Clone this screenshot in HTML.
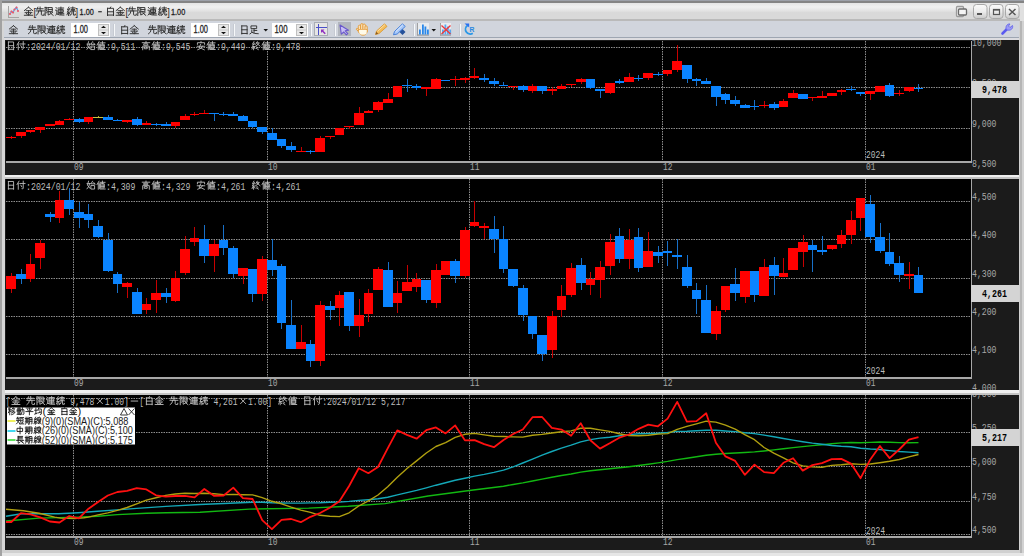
<!DOCTYPE html>
<html><head><meta charset="utf-8">
<style>
html,body{margin:0;padding:0;width:1024px;height:556px;overflow:hidden;background:#d6d6d6;}
svg{position:absolute;left:0;top:0;display:block;}
</style></head><body>
<svg width="1024" height="556" viewBox="0 0 1024 556">
<rect x="0" y="0" width="1024" height="556" fill="#d6d6d6"/>
<rect x="0" y="0" width="1024" height="1" fill="#9ca0a8"/>
<rect x="0" y="1" width="1024" height="2" fill="#848484"/>
<rect x="0" y="0" width="2" height="556" fill="#a2a2a2"/>
<defs><linearGradient id="tg" x1="0" y1="0" x2="0" y2="1"><stop offset="0" stop-color="#e4e4e4"/><stop offset="0.25" stop-color="#f0f0f0"/><stop offset="0.5" stop-color="#e2e2e2"/><stop offset="0.6" stop-color="#d9d9d9"/><stop offset="1" stop-color="#d9d9d9"/></linearGradient><linearGradient id="bg" x1="0" y1="0" x2="0" y2="1"><stop offset="0" stop-color="#fbfbfb"/><stop offset="0.5" stop-color="#ececec"/><stop offset="1" stop-color="#cacaca"/></linearGradient></defs>
<rect x="2" y="3" width="1022" height="16" fill="url(#tg)"/>
<rect x="2" y="19" width="1022" height="2" fill="#bababa"/>
<rect x="1019" y="21" width="5" height="535" fill="#d2d2d2"/>
<rect x="1020" y="21" width="2" height="532" fill="#b6b6b6"/>
<rect x="1020" y="3" width="4" height="18" fill="#e0e0e0"/>
<rect x="4" y="21" width="1015" height="16" fill="#d1d5dd"/>
<rect x="4" y="37" width="1015" height="1" fill="#9ea6b2"/>
<rect x="4" y="38" width="1015" height="2" fill="#dcdce0"/>
<rect x="5" y="40" width="1014" height="510" fill="#1b1b1b"/>
<rect x="2" y="550" width="1018" height="6" fill="#d0d0d0"/>
<rect x="2" y="553" width="1022" height="3" fill="#e6e6e6"/>
<rect x="6" y="41" width="965" height="120" fill="#000"/>
<rect x="971" y="41" width="1" height="122" fill="#a8a8a8"/>
<rect x="6" y="161" width="966" height="2" fill="#a8a8a8"/>
<rect x="6" y="179" width="965" height="198" fill="#000"/>
<rect x="971" y="179" width="1" height="200" fill="#a8a8a8"/>
<rect x="6" y="377" width="966" height="2" fill="#a8a8a8"/>
<rect x="6" y="395" width="965" height="141" fill="#000"/>
<rect x="971" y="395" width="1" height="143" fill="#a8a8a8"/>
<rect x="6" y="536" width="966" height="2" fill="#a8a8a8"/>
<g stroke="#8e8e8e" stroke-width="1" stroke-dasharray="1.5,1" fill="none">
<line x1="6" y1="47.5" x2="971" y2="47.5" />
<line x1="6" y1="87.5" x2="971" y2="87.5" />
<line x1="6" y1="128.5" x2="971" y2="128.5" />
<line x1="73.5" y1="41" x2="73.5" y2="161" />
<line x1="267.5" y1="41" x2="267.5" y2="161" />
<line x1="469.5" y1="41" x2="469.5" y2="161" />
<line x1="662.5" y1="41" x2="662.5" y2="161" />
<line x1="865.5" y1="41" x2="865.5" y2="161" />
<line x1="6" y1="201.5" x2="971" y2="201.5" />
<line x1="6" y1="239.5" x2="971" y2="239.5" />
<line x1="6" y1="278.5" x2="971" y2="278.5" />
<line x1="6" y1="316.5" x2="971" y2="316.5" />
<line x1="6" y1="354.5" x2="971" y2="354.5" />
<line x1="73.5" y1="179" x2="73.5" y2="377" />
<line x1="267.5" y1="179" x2="267.5" y2="377" />
<line x1="469.5" y1="179" x2="469.5" y2="377" />
<line x1="662.5" y1="179" x2="662.5" y2="377" />
<line x1="865.5" y1="179" x2="865.5" y2="377" />
<line x1="6" y1="398.5" x2="971" y2="398.5" />
<line x1="6" y1="432.5" x2="971" y2="432.5" />
<line x1="6" y1="466.5" x2="971" y2="466.5" />
<line x1="6" y1="501.5" x2="971" y2="501.5" />
<line x1="6" y1="534.5" x2="971" y2="534.5" />
<line x1="73.5" y1="395" x2="73.5" y2="536" />
<line x1="267.5" y1="395" x2="267.5" y2="536" />
<line x1="469.5" y1="395" x2="469.5" y2="536" />
<line x1="662.5" y1="395" x2="662.5" y2="536" />
<line x1="865.5" y1="395" x2="865.5" y2="536" />
</g>
<g shape-rendering="crispEdges">
<rect x="11" y="136" width="1" height="3" fill="#c80000"/>
<rect x="6" y="137" width="10" height="1" fill="#ff0000"/>
<rect x="21" y="132" width="1" height="6" fill="#c80000"/>
<rect x="16" y="132" width="10" height="4" fill="#ff0000"/>
<rect x="30" y="130" width="1" height="3" fill="#c80000"/>
<rect x="26" y="130" width="9" height="2" fill="#ff0000"/>
<rect x="40" y="127" width="1" height="6" fill="#c80000"/>
<rect x="35" y="127" width="10" height="3" fill="#ff0000"/>
<rect x="50" y="124" width="1" height="2" fill="#c80000"/>
<rect x="45" y="124" width="10" height="2" fill="#ff0000"/>
<rect x="59" y="120" width="1" height="5" fill="#c80000"/>
<rect x="55" y="121" width="9" height="4" fill="#ff0000"/>
<rect x="69" y="118" width="1" height="2" fill="#c80000"/>
<rect x="64" y="119" width="10" height="1" fill="#ff0000"/>
<rect x="79" y="118" width="1" height="5" fill="#1870c8"/>
<rect x="74" y="119" width="10" height="3" fill="#0a84ff"/>
<rect x="88" y="117" width="1" height="7" fill="#c80000"/>
<rect x="84" y="117" width="9" height="5" fill="#ff0000"/>
<rect x="98" y="116" width="1" height="2" fill="#b0a830"/>
<rect x="93" y="117" width="10" height="1" fill="#c8c040"/>
<rect x="108" y="115" width="1" height="5" fill="#1870c8"/>
<rect x="103" y="117" width="10" height="3" fill="#0a84ff"/>
<rect x="117" y="119" width="1" height="2" fill="#1870c8"/>
<rect x="113" y="120" width="9" height="1" fill="#0a84ff"/>
<rect x="127" y="120" width="1" height="3" fill="#c80000"/>
<rect x="122" y="120" width="10" height="2" fill="#ff0000"/>
<rect x="137" y="117" width="1" height="9" fill="#1870c8"/>
<rect x="132" y="119" width="10" height="6" fill="#0a84ff"/>
<rect x="146" y="121" width="1" height="4" fill="#c80000"/>
<rect x="142" y="123" width="9" height="2" fill="#ff0000"/>
<rect x="156" y="123" width="1" height="3" fill="#1870c8"/>
<rect x="151" y="124" width="10" height="1" fill="#0a84ff"/>
<rect x="166" y="122" width="1" height="4" fill="#1870c8"/>
<rect x="161" y="124" width="10" height="2" fill="#0a84ff"/>
<rect x="175" y="122" width="1" height="6" fill="#c80000"/>
<rect x="171" y="122" width="9" height="4" fill="#ff0000"/>
<rect x="185" y="114" width="1" height="6" fill="#c80000"/>
<rect x="180" y="116" width="10" height="4" fill="#ff0000"/>
<rect x="194" y="112" width="1" height="4" fill="#c80000"/>
<rect x="190" y="114" width="9" height="1" fill="#ff0000"/>
<rect x="204" y="110" width="1" height="4" fill="#c80000"/>
<rect x="199" y="113" width="10" height="1" fill="#ff0000"/>
<rect x="214" y="113" width="1" height="8" fill="#1870c8"/>
<rect x="209" y="113" width="10" height="1" fill="#0a84ff"/>
<rect x="223" y="112" width="1" height="4" fill="#1870c8"/>
<rect x="219" y="114" width="9" height="1" fill="#0a84ff"/>
<rect x="233" y="112" width="1" height="4" fill="#1870c8"/>
<rect x="228" y="114" width="10" height="2" fill="#0a84ff"/>
<rect x="243" y="115" width="1" height="6" fill="#1870c8"/>
<rect x="238" y="116" width="10" height="5" fill="#0a84ff"/>
<rect x="252" y="121" width="1" height="7" fill="#1870c8"/>
<rect x="248" y="121" width="9" height="6" fill="#0a84ff"/>
<rect x="262" y="127" width="1" height="7" fill="#1870c8"/>
<rect x="257" y="127" width="10" height="5" fill="#0a84ff"/>
<rect x="272" y="128" width="1" height="12" fill="#1870c8"/>
<rect x="267" y="133" width="10" height="7" fill="#0a84ff"/>
<rect x="281" y="139" width="1" height="9" fill="#1870c8"/>
<rect x="277" y="139" width="9" height="7" fill="#0a84ff"/>
<rect x="291" y="142" width="1" height="10" fill="#1870c8"/>
<rect x="286" y="146" width="10" height="4" fill="#0a84ff"/>
<rect x="301" y="147" width="1" height="5" fill="#c80000"/>
<rect x="296" y="151" width="10" height="1" fill="#ff0000"/>
<rect x="310" y="150" width="1" height="4" fill="#1870c8"/>
<rect x="306" y="151" width="9" height="1" fill="#0a84ff"/>
<rect x="320" y="136" width="1" height="16" fill="#c80000"/>
<rect x="315" y="138" width="10" height="14" fill="#ff0000"/>
<rect x="330" y="136" width="1" height="3" fill="#c80000"/>
<rect x="325" y="136" width="10" height="1" fill="#ff0000"/>
<rect x="339" y="128" width="1" height="7" fill="#c80000"/>
<rect x="335" y="128" width="9" height="7" fill="#ff0000"/>
<rect x="349" y="126" width="1" height="3" fill="#c80000"/>
<rect x="344" y="126" width="10" height="1" fill="#ff0000"/>
<rect x="359" y="107" width="1" height="18" fill="#c80000"/>
<rect x="354" y="113" width="10" height="12" fill="#ff0000"/>
<rect x="368" y="110" width="1" height="3" fill="#c80000"/>
<rect x="364" y="111" width="9" height="2" fill="#ff0000"/>
<rect x="378" y="101" width="1" height="11" fill="#c80000"/>
<rect x="373" y="102" width="10" height="8" fill="#ff0000"/>
<rect x="388" y="93" width="1" height="10" fill="#c80000"/>
<rect x="383" y="99" width="10" height="4" fill="#ff0000"/>
<rect x="397" y="86" width="1" height="11" fill="#c80000"/>
<rect x="393" y="86" width="9" height="11" fill="#ff0000"/>
<rect x="407" y="79" width="1" height="13" fill="#1870c8"/>
<rect x="402" y="85" width="10" height="1" fill="#0a84ff"/>
<rect x="416" y="84" width="1" height="6" fill="#1870c8"/>
<rect x="412" y="86" width="9" height="2" fill="#0a84ff"/>
<rect x="426" y="87" width="1" height="9" fill="#c80000"/>
<rect x="421" y="87" width="10" height="2" fill="#ff0000"/>
<rect x="436" y="78" width="1" height="11" fill="#c80000"/>
<rect x="431" y="79" width="10" height="10" fill="#ff0000"/>
<rect x="445" y="80" width="1" height="1" fill="#1870c8"/>
<rect x="441" y="80" width="9" height="1" fill="#0a84ff"/>
<rect x="455" y="76" width="1" height="10" fill="#c80000"/>
<rect x="450" y="79" width="10" height="1" fill="#ff0000"/>
<rect x="465" y="77" width="1" height="6" fill="#c80000"/>
<rect x="460" y="78" width="10" height="2" fill="#ff0000"/>
<rect x="474" y="68" width="1" height="11" fill="#c80000"/>
<rect x="470" y="76" width="9" height="2" fill="#ff0000"/>
<rect x="484" y="74" width="1" height="8" fill="#1870c8"/>
<rect x="479" y="78" width="10" height="2" fill="#0a84ff"/>
<rect x="494" y="78" width="1" height="8" fill="#1870c8"/>
<rect x="489" y="81" width="10" height="3" fill="#0a84ff"/>
<rect x="503" y="82" width="1" height="4" fill="#1870c8"/>
<rect x="499" y="85" width="9" height="1" fill="#0a84ff"/>
<rect x="513" y="86" width="1" height="4" fill="#c80000"/>
<rect x="508" y="86" width="10" height="1" fill="#ff0000"/>
<rect x="523" y="85" width="1" height="7" fill="#1870c8"/>
<rect x="518" y="86" width="10" height="4" fill="#0a84ff"/>
<rect x="532" y="84" width="1" height="9" fill="#c80000"/>
<rect x="528" y="86" width="9" height="5" fill="#ff0000"/>
<rect x="542" y="86" width="1" height="8" fill="#1870c8"/>
<rect x="537" y="86" width="10" height="5" fill="#0a84ff"/>
<rect x="552" y="87" width="1" height="8" fill="#c80000"/>
<rect x="547" y="89" width="10" height="2" fill="#ff0000"/>
<rect x="561" y="84" width="1" height="5" fill="#c80000"/>
<rect x="557" y="86" width="9" height="3" fill="#ff0000"/>
<rect x="571" y="84" width="1" height="3" fill="#c80000"/>
<rect x="566" y="84" width="10" height="1" fill="#ff0000"/>
<rect x="581" y="78" width="1" height="6" fill="#c80000"/>
<rect x="576" y="79" width="10" height="3" fill="#ff0000"/>
<rect x="590" y="79" width="1" height="10" fill="#1870c8"/>
<rect x="586" y="79" width="9" height="9" fill="#0a84ff"/>
<rect x="600" y="89" width="1" height="9" fill="#1870c8"/>
<rect x="595" y="89" width="10" height="2" fill="#0a84ff"/>
<rect x="610" y="83" width="1" height="11" fill="#c80000"/>
<rect x="605" y="83" width="10" height="10" fill="#ff0000"/>
<rect x="619" y="79" width="1" height="5" fill="#1870c8"/>
<rect x="615" y="81" width="9" height="2" fill="#0a84ff"/>
<rect x="629" y="73" width="1" height="9" fill="#c80000"/>
<rect x="624" y="77" width="10" height="5" fill="#ff0000"/>
<rect x="638" y="75" width="1" height="6" fill="#1870c8"/>
<rect x="634" y="78" width="9" height="1" fill="#0a84ff"/>
<rect x="648" y="73" width="1" height="7" fill="#c80000"/>
<rect x="643" y="73" width="10" height="5" fill="#ff0000"/>
<rect x="658" y="72" width="1" height="4" fill="#1870c8"/>
<rect x="653" y="74" width="10" height="1" fill="#0a84ff"/>
<rect x="667" y="70" width="1" height="6" fill="#c80000"/>
<rect x="663" y="70" width="9" height="4" fill="#ff0000"/>
<rect x="677" y="45" width="1" height="27" fill="#c80000"/>
<rect x="672" y="61" width="10" height="9" fill="#ff0000"/>
<rect x="687" y="65" width="1" height="18" fill="#1870c8"/>
<rect x="682" y="65" width="10" height="14" fill="#0a84ff"/>
<rect x="696" y="78" width="1" height="8" fill="#1870c8"/>
<rect x="692" y="79" width="9" height="2" fill="#0a84ff"/>
<rect x="706" y="78" width="1" height="6" fill="#1870c8"/>
<rect x="701" y="81" width="10" height="3" fill="#0a84ff"/>
<rect x="716" y="86" width="1" height="20" fill="#1870c8"/>
<rect x="711" y="86" width="10" height="11" fill="#0a84ff"/>
<rect x="725" y="93" width="1" height="11" fill="#1870c8"/>
<rect x="721" y="94" width="9" height="6" fill="#0a84ff"/>
<rect x="735" y="96" width="1" height="10" fill="#1870c8"/>
<rect x="730" y="100" width="10" height="4" fill="#0a84ff"/>
<rect x="745" y="104" width="1" height="4" fill="#1870c8"/>
<rect x="740" y="105" width="10" height="3" fill="#0a84ff"/>
<rect x="754" y="100" width="1" height="10" fill="#1870c8"/>
<rect x="750" y="106" width="9" height="1" fill="#0a84ff"/>
<rect x="764" y="101" width="1" height="7" fill="#c80000"/>
<rect x="759" y="105" width="10" height="1" fill="#ff0000"/>
<rect x="774" y="102" width="1" height="8" fill="#1870c8"/>
<rect x="769" y="104" width="10" height="4" fill="#0a84ff"/>
<rect x="783" y="99" width="1" height="8" fill="#c80000"/>
<rect x="779" y="101" width="9" height="6" fill="#ff0000"/>
<rect x="793" y="90" width="1" height="8" fill="#c80000"/>
<rect x="788" y="93" width="10" height="5" fill="#ff0000"/>
<rect x="803" y="94" width="1" height="5" fill="#1870c8"/>
<rect x="798" y="94" width="10" height="5" fill="#0a84ff"/>
<rect x="812" y="97" width="1" height="4" fill="#c80000"/>
<rect x="808" y="97" width="9" height="1" fill="#ff0000"/>
<rect x="822" y="91" width="1" height="7" fill="#c80000"/>
<rect x="817" y="96" width="10" height="2" fill="#ff0000"/>
<rect x="832" y="93" width="1" height="3" fill="#c80000"/>
<rect x="827" y="93" width="10" height="3" fill="#ff0000"/>
<rect x="841" y="89" width="1" height="6" fill="#c80000"/>
<rect x="837" y="90" width="9" height="2" fill="#ff0000"/>
<rect x="851" y="86" width="1" height="5" fill="#1870c8"/>
<rect x="846" y="89" width="10" height="1" fill="#0a84ff"/>
<rect x="860" y="92" width="1" height="4" fill="#1870c8"/>
<rect x="856" y="92" width="9" height="2" fill="#0a84ff"/>
<rect x="870" y="91" width="1" height="9" fill="#c80000"/>
<rect x="865" y="91" width="10" height="3" fill="#ff0000"/>
<rect x="880" y="86" width="1" height="6" fill="#c80000"/>
<rect x="875" y="86" width="10" height="6" fill="#ff0000"/>
<rect x="889" y="83" width="1" height="14" fill="#1870c8"/>
<rect x="885" y="85" width="9" height="11" fill="#0a84ff"/>
<rect x="899" y="90" width="1" height="6" fill="#c80000"/>
<rect x="894" y="93" width="10" height="1" fill="#ff0000"/>
<rect x="909" y="87" width="1" height="5" fill="#c80000"/>
<rect x="904" y="87" width="10" height="4" fill="#ff0000"/>
<rect x="918" y="84" width="1" height="8" fill="#1870c8"/>
<rect x="914" y="88" width="9" height="1" fill="#0a84ff"/>
<rect x="11" y="273" width="1" height="20" fill="#c80000"/>
<rect x="6" y="276" width="10" height="13" fill="#ff0000"/>
<rect x="21" y="269" width="1" height="15" fill="#1870c8"/>
<rect x="16" y="274" width="10" height="5" fill="#0a84ff"/>
<rect x="30" y="254" width="1" height="28" fill="#c80000"/>
<rect x="26" y="264" width="9" height="15" fill="#ff0000"/>
<rect x="40" y="240" width="1" height="29" fill="#c80000"/>
<rect x="35" y="243" width="10" height="15" fill="#ff0000"/>
<rect x="50" y="212" width="1" height="10" fill="#1870c8"/>
<rect x="45" y="214" width="10" height="3" fill="#0a84ff"/>
<rect x="59" y="191" width="1" height="32" fill="#c80000"/>
<rect x="55" y="200" width="9" height="18" fill="#ff0000"/>
<rect x="69" y="188" width="1" height="27" fill="#1870c8"/>
<rect x="64" y="200" width="10" height="9" fill="#0a84ff"/>
<rect x="79" y="202" width="1" height="26" fill="#1870c8"/>
<rect x="74" y="212" width="10" height="6" fill="#0a84ff"/>
<rect x="88" y="204" width="1" height="24" fill="#1870c8"/>
<rect x="84" y="214" width="9" height="6" fill="#0a84ff"/>
<rect x="98" y="220" width="1" height="18" fill="#1870c8"/>
<rect x="93" y="226" width="10" height="11" fill="#0a84ff"/>
<rect x="108" y="233" width="1" height="39" fill="#1870c8"/>
<rect x="103" y="240" width="10" height="31" fill="#0a84ff"/>
<rect x="117" y="272" width="1" height="21" fill="#1870c8"/>
<rect x="113" y="274" width="9" height="10" fill="#0a84ff"/>
<rect x="127" y="282" width="1" height="16" fill="#c80000"/>
<rect x="122" y="283" width="10" height="4" fill="#ff0000"/>
<rect x="137" y="288" width="1" height="26" fill="#1870c8"/>
<rect x="132" y="292" width="10" height="22" fill="#0a84ff"/>
<rect x="146" y="298" width="1" height="16" fill="#c80000"/>
<rect x="142" y="304" width="9" height="6" fill="#ff0000"/>
<rect x="156" y="280" width="1" height="33" fill="#c80000"/>
<rect x="151" y="293" width="10" height="7" fill="#ff0000"/>
<rect x="166" y="288" width="1" height="15" fill="#1870c8"/>
<rect x="161" y="293" width="10" height="4" fill="#0a84ff"/>
<rect x="175" y="271" width="1" height="31" fill="#c80000"/>
<rect x="171" y="278" width="9" height="23" fill="#ff0000"/>
<rect x="185" y="236" width="1" height="39" fill="#c80000"/>
<rect x="180" y="249" width="10" height="24" fill="#ff0000"/>
<rect x="194" y="227" width="1" height="19" fill="#c80000"/>
<rect x="190" y="238" width="9" height="4" fill="#ff0000"/>
<rect x="204" y="225" width="1" height="38" fill="#1870c8"/>
<rect x="199" y="239" width="10" height="17" fill="#0a84ff"/>
<rect x="214" y="240" width="1" height="32" fill="#c80000"/>
<rect x="209" y="244" width="10" height="12" fill="#ff0000"/>
<rect x="223" y="225" width="1" height="30" fill="#1870c8"/>
<rect x="219" y="240" width="9" height="8" fill="#0a84ff"/>
<rect x="233" y="246" width="1" height="32" fill="#1870c8"/>
<rect x="228" y="248" width="10" height="26" fill="#0a84ff"/>
<rect x="243" y="268" width="1" height="16" fill="#c80000"/>
<rect x="238" y="268" width="10" height="8" fill="#ff0000"/>
<rect x="252" y="269" width="1" height="33" fill="#1870c8"/>
<rect x="248" y="269" width="9" height="25" fill="#0a84ff"/>
<rect x="262" y="256" width="1" height="45" fill="#c80000"/>
<rect x="257" y="259" width="10" height="35" fill="#ff0000"/>
<rect x="272" y="239" width="1" height="37" fill="#1870c8"/>
<rect x="267" y="260" width="10" height="10" fill="#0a84ff"/>
<rect x="281" y="264" width="1" height="65" fill="#1870c8"/>
<rect x="277" y="266" width="9" height="57" fill="#0a84ff"/>
<rect x="291" y="300" width="1" height="49" fill="#1870c8"/>
<rect x="286" y="325" width="10" height="24" fill="#0a84ff"/>
<rect x="301" y="325" width="1" height="24" fill="#c80000"/>
<rect x="296" y="342" width="10" height="7" fill="#ff0000"/>
<rect x="310" y="340" width="1" height="27" fill="#1870c8"/>
<rect x="306" y="344" width="9" height="17" fill="#0a84ff"/>
<rect x="320" y="301" width="1" height="65" fill="#c80000"/>
<rect x="315" y="305" width="10" height="56" fill="#ff0000"/>
<rect x="330" y="301" width="1" height="19" fill="#1870c8"/>
<rect x="325" y="306" width="10" height="4" fill="#0a84ff"/>
<rect x="339" y="291" width="1" height="35" fill="#c80000"/>
<rect x="335" y="295" width="9" height="13" fill="#ff0000"/>
<rect x="349" y="292" width="1" height="39" fill="#1870c8"/>
<rect x="344" y="292" width="10" height="34" fill="#0a84ff"/>
<rect x="359" y="299" width="1" height="38" fill="#c80000"/>
<rect x="354" y="315" width="10" height="11" fill="#ff0000"/>
<rect x="368" y="289" width="1" height="33" fill="#c80000"/>
<rect x="364" y="293" width="9" height="21" fill="#ff0000"/>
<rect x="378" y="267" width="1" height="23" fill="#c80000"/>
<rect x="373" y="269" width="10" height="21" fill="#ff0000"/>
<rect x="388" y="262" width="1" height="45" fill="#1870c8"/>
<rect x="383" y="270" width="10" height="37" fill="#0a84ff"/>
<rect x="397" y="281" width="1" height="32" fill="#c80000"/>
<rect x="393" y="293" width="9" height="10" fill="#ff0000"/>
<rect x="407" y="265" width="1" height="26" fill="#c80000"/>
<rect x="402" y="282" width="10" height="9" fill="#ff0000"/>
<rect x="416" y="273" width="1" height="19" fill="#c80000"/>
<rect x="412" y="279" width="9" height="8" fill="#ff0000"/>
<rect x="426" y="280" width="1" height="23" fill="#1870c8"/>
<rect x="421" y="280" width="10" height="20" fill="#0a84ff"/>
<rect x="436" y="264" width="1" height="44" fill="#c80000"/>
<rect x="431" y="270" width="10" height="33" fill="#ff0000"/>
<rect x="445" y="261" width="1" height="14" fill="#c80000"/>
<rect x="441" y="261" width="9" height="14" fill="#ff0000"/>
<rect x="455" y="259" width="1" height="24" fill="#1870c8"/>
<rect x="450" y="261" width="10" height="15" fill="#0a84ff"/>
<rect x="465" y="227" width="1" height="51" fill="#c80000"/>
<rect x="460" y="230" width="10" height="46" fill="#ff0000"/>
<rect x="474" y="201" width="1" height="26" fill="#c80000"/>
<rect x="470" y="222" width="9" height="4" fill="#ff0000"/>
<rect x="484" y="223" width="1" height="16" fill="#c80000"/>
<rect x="479" y="226" width="10" height="2" fill="#ff0000"/>
<rect x="494" y="216" width="1" height="37" fill="#1870c8"/>
<rect x="489" y="229" width="10" height="10" fill="#0a84ff"/>
<rect x="503" y="226" width="1" height="47" fill="#1870c8"/>
<rect x="499" y="239" width="9" height="30" fill="#0a84ff"/>
<rect x="513" y="269" width="1" height="18" fill="#1870c8"/>
<rect x="508" y="269" width="10" height="17" fill="#0a84ff"/>
<rect x="523" y="285" width="1" height="36" fill="#1870c8"/>
<rect x="518" y="288" width="10" height="27" fill="#0a84ff"/>
<rect x="532" y="316" width="1" height="23" fill="#1870c8"/>
<rect x="528" y="316" width="9" height="18" fill="#0a84ff"/>
<rect x="542" y="335" width="1" height="26" fill="#1870c8"/>
<rect x="537" y="335" width="10" height="19" fill="#0a84ff"/>
<rect x="552" y="311" width="1" height="47" fill="#c80000"/>
<rect x="547" y="316" width="10" height="34" fill="#ff0000"/>
<rect x="561" y="285" width="1" height="32" fill="#c80000"/>
<rect x="557" y="296" width="9" height="14" fill="#ff0000"/>
<rect x="571" y="263" width="1" height="34" fill="#c80000"/>
<rect x="566" y="268" width="10" height="27" fill="#ff0000"/>
<rect x="581" y="258" width="1" height="32" fill="#1870c8"/>
<rect x="576" y="265" width="10" height="18" fill="#0a84ff"/>
<rect x="590" y="272" width="1" height="23" fill="#c80000"/>
<rect x="586" y="279" width="9" height="6" fill="#ff0000"/>
<rect x="600" y="261" width="1" height="37" fill="#c80000"/>
<rect x="595" y="267" width="10" height="13" fill="#ff0000"/>
<rect x="610" y="234" width="1" height="41" fill="#c80000"/>
<rect x="605" y="242" width="10" height="24" fill="#ff0000"/>
<rect x="619" y="228" width="1" height="35" fill="#1870c8"/>
<rect x="615" y="236" width="9" height="23" fill="#0a84ff"/>
<rect x="629" y="229" width="1" height="40" fill="#c80000"/>
<rect x="624" y="240" width="10" height="19" fill="#ff0000"/>
<rect x="638" y="228" width="1" height="44" fill="#1870c8"/>
<rect x="634" y="237" width="9" height="31" fill="#0a84ff"/>
<rect x="648" y="232" width="1" height="35" fill="#c80000"/>
<rect x="643" y="251" width="10" height="16" fill="#ff0000"/>
<rect x="658" y="246" width="1" height="17" fill="#1870c8"/>
<rect x="653" y="252" width="10" height="4" fill="#0a84ff"/>
<rect x="667" y="241" width="1" height="25" fill="#1870c8"/>
<rect x="663" y="251" width="9" height="2" fill="#0a84ff"/>
<rect x="677" y="239" width="1" height="30" fill="#1870c8"/>
<rect x="672" y="255" width="10" height="2" fill="#0a84ff"/>
<rect x="687" y="255" width="1" height="33" fill="#1870c8"/>
<rect x="682" y="267" width="10" height="19" fill="#0a84ff"/>
<rect x="696" y="283" width="1" height="31" fill="#1870c8"/>
<rect x="692" y="290" width="9" height="9" fill="#0a84ff"/>
<rect x="706" y="285" width="1" height="48" fill="#1870c8"/>
<rect x="701" y="300" width="10" height="33" fill="#0a84ff"/>
<rect x="716" y="306" width="1" height="34" fill="#c80000"/>
<rect x="711" y="311" width="10" height="23" fill="#ff0000"/>
<rect x="725" y="286" width="1" height="26" fill="#c80000"/>
<rect x="721" y="286" width="9" height="24" fill="#ff0000"/>
<rect x="735" y="268" width="1" height="33" fill="#1870c8"/>
<rect x="730" y="284" width="10" height="9" fill="#0a84ff"/>
<rect x="745" y="271" width="1" height="32" fill="#c80000"/>
<rect x="740" y="271" width="10" height="26" fill="#ff0000"/>
<rect x="754" y="271" width="1" height="31" fill="#1870c8"/>
<rect x="750" y="271" width="9" height="24" fill="#0a84ff"/>
<rect x="764" y="259" width="1" height="37" fill="#c80000"/>
<rect x="759" y="267" width="10" height="29" fill="#ff0000"/>
<rect x="774" y="257" width="1" height="38" fill="#1870c8"/>
<rect x="769" y="265" width="10" height="11" fill="#0a84ff"/>
<rect x="783" y="258" width="1" height="19" fill="#c80000"/>
<rect x="779" y="273" width="9" height="4" fill="#ff0000"/>
<rect x="793" y="248" width="1" height="22" fill="#c80000"/>
<rect x="788" y="248" width="10" height="22" fill="#ff0000"/>
<rect x="803" y="235" width="1" height="32" fill="#c80000"/>
<rect x="798" y="242" width="10" height="10" fill="#ff0000"/>
<rect x="812" y="240" width="1" height="32" fill="#1870c8"/>
<rect x="808" y="245" width="9" height="5" fill="#0a84ff"/>
<rect x="822" y="236" width="1" height="19" fill="#1870c8"/>
<rect x="817" y="250" width="10" height="2" fill="#0a84ff"/>
<rect x="832" y="245" width="1" height="5" fill="#c80000"/>
<rect x="827" y="245" width="10" height="4" fill="#ff0000"/>
<rect x="841" y="230" width="1" height="18" fill="#c80000"/>
<rect x="837" y="235" width="9" height="9" fill="#ff0000"/>
<rect x="851" y="211" width="1" height="33" fill="#c80000"/>
<rect x="846" y="220" width="10" height="15" fill="#ff0000"/>
<rect x="860" y="198" width="1" height="33" fill="#c80000"/>
<rect x="856" y="198" width="9" height="20" fill="#ff0000"/>
<rect x="870" y="195" width="1" height="48" fill="#1870c8"/>
<rect x="865" y="204" width="10" height="33" fill="#0a84ff"/>
<rect x="880" y="223" width="1" height="30" fill="#1870c8"/>
<rect x="875" y="237" width="10" height="14" fill="#0a84ff"/>
<rect x="889" y="233" width="1" height="33" fill="#1870c8"/>
<rect x="885" y="252" width="9" height="12" fill="#0a84ff"/>
<rect x="899" y="256" width="1" height="26" fill="#1870c8"/>
<rect x="894" y="263" width="10" height="12" fill="#0a84ff"/>
<rect x="909" y="262" width="1" height="27" fill="#c80000"/>
<rect x="904" y="274" width="10" height="2" fill="#ff0000"/>
<rect x="918" y="267" width="1" height="26" fill="#1870c8"/>
<rect x="914" y="275" width="9" height="18" fill="#0a84ff"/>
</g>
<g fill="none" stroke-linejoin="round">
<polyline points="6.0,521.0 39.0,518.1 78.0,517.1 97.7,516.2 117.2,514.6 146.5,513.2 166.0,512.7 200.0,512.3 249.3,509.1 308.7,508.1 348.3,506.2 385.0,503.6 428.1,496.0 471.3,490.2 503.5,486.2 513.2,484.5 522.8,482.9 532.5,481.0 542.1,479.1 551.8,477.3 561.4,475.5 571.1,474.0 580.7,472.1 590.4,470.8 600.0,469.8 609.7,468.8 619.3,467.7 629.0,466.7 638.6,465.5 648.3,464.3 657.9,462.9 667.6,461.4 677.2,459.6 686.9,458.2 696.5,456.7 706.2,455.3 715.9,454.3 725.5,453.5 735.2,453.0 744.8,452.5 754.5,451.9 764.1,451.0 773.8,449.9 783.4,448.8 793.1,447.6 802.7,446.6 812.4,445.6 822.0,444.7 831.7,443.7 841.3,442.9 851.0,442.5 860.6,442.7 870.3,442.4 879.9,442.0 889.6,442.2 899.2,442.6 908.9,442.7 918.5,442.6" stroke="#12b812" stroke-width="1.4"/>
<polyline points="6.0,516.2 21.5,513.8 58.6,513.8 78.0,512.7 97.7,511.3 117.2,509.9 136.7,508.4 166.0,506.4 200.0,504.5 229.6,503.2 252.6,502.2 262.2,502.2 271.9,502.8 281.5,503.0 291.2,503.1 300.8,503.1 310.5,502.9 320.1,502.8 329.8,502.3 339.4,502.1 349.1,501.4 358.7,500.4 368.4,499.7 378.0,498.8 387.7,497.2 397.3,494.9 407.0,492.6 416.6,490.4 426.3,487.9 435.9,485.2 445.6,482.8 455.2,480.3 464.9,478.2 474.6,476.1 484.2,474.4 493.9,472.4 503.5,470.1 513.2,466.8 522.8,463.0 532.5,459.1 542.1,455.1 551.8,451.5 561.4,448.1 571.1,445.2 580.7,441.9 590.4,439.6 600.0,438.1 609.7,437.2 619.3,435.8 629.0,434.6 638.6,433.8 648.3,433.6 657.9,433.3 667.6,432.5 677.2,431.4 686.9,431.2 696.5,430.7 706.2,430.2 715.9,430.3 725.5,431.0 735.2,431.6 744.8,432.7 754.5,433.6 764.1,435.1 773.8,436.8 783.4,438.5 793.1,440.1 802.7,441.7 812.4,443.1 822.0,444.2 831.7,445.5 841.3,446.3 851.0,446.8 860.6,448.2 870.3,449.0 879.9,449.5 889.6,450.6 899.2,451.5 908.9,452.1 918.5,452.8" stroke="#14a8b8" stroke-width="1.4"/>
<polyline points="6.0,509.3 23.4,510.7 39.0,513.2 54.7,517.1 60.5,518.1 74.2,518.5 84.0,517.7 88.5,517.1 98.1,514.9 107.8,512.9 117.4,510.4 127.1,507.5 136.7,503.8 146.4,500.1 156.0,497.8 165.7,495.4 175.3,494.0 185.0,493.3 194.6,493.5 204.3,493.2 213.9,493.7 223.6,494.6 233.3,494.4 242.9,494.7 252.6,494.9 262.2,497.6 271.9,501.3 281.5,503.8 291.2,507.2 300.8,510.1 310.5,512.4 320.1,515.3 329.8,516.3 339.4,516.6 349.1,512.8 358.7,506.0 368.4,500.8 378.0,495.0 387.7,486.8 397.3,477.2 407.0,468.5 416.6,460.9 426.3,453.0 435.9,446.5 445.6,442.6 455.2,437.3 464.9,434.3 474.6,433.4 484.2,434.9 493.9,436.3 503.5,436.5 513.2,436.9 522.8,437.1 532.5,435.3 542.1,434.4 551.8,433.0 561.4,431.8 571.1,430.9 580.7,428.3 590.4,428.3 600.0,429.9 609.7,431.4 619.3,433.7 629.0,435.6 638.6,435.7 648.3,435.2 657.9,434.1 667.6,433.6 677.2,429.4 686.9,426.4 696.5,423.9 706.2,421.2 715.9,422.1 725.5,425.2 735.2,429.2 744.8,434.6 754.5,439.7 764.1,447.5 773.8,453.2 783.4,457.9 793.1,462.8 802.7,465.9 812.4,466.9 822.0,467.2 831.7,465.4 841.3,464.8 851.0,463.8 860.6,464.4 870.3,464.0 879.9,462.7 889.6,461.3 899.2,459.5 908.9,456.9 918.5,454.5" stroke="#b0a010" stroke-width="1.4"/>
<polyline points="6.0,522.0 11.3,522.0 20.9,513.1 30.6,514.4 40.2,517.4 49.9,521.5 59.5,522.5 69.2,516.0 78.8,518.4 88.5,508.7 98.1,502.0 107.8,495.5 117.4,492.0 127.1,490.9 136.7,488.2 146.4,489.4 156.0,495.3 165.7,496.6 175.3,496.0 185.0,495.9 194.6,497.4 204.3,489.0 213.9,495.8 223.6,495.5 233.3,487.6 242.9,498.2 252.6,499.0 262.2,520.1 271.9,529.1 281.5,519.9 291.2,519.0 300.8,522.2 310.5,516.8 320.1,513.0 329.8,507.7 339.4,501.2 349.1,486.0 358.7,468.2 368.4,473.2 378.0,467.0 387.7,448.3 397.3,430.4 407.0,434.9 416.6,438.7 426.3,430.2 435.9,427.4 445.6,433.4 455.2,425.4 464.9,440.3 474.6,440.1 484.2,444.1 493.9,447.2 503.5,440.0 513.2,434.0 522.8,429.5 532.5,417.2 542.1,417.0 551.8,427.9 561.4,429.6 571.1,435.8 580.7,423.3 590.4,440.2 600.0,448.6 609.7,443.3 619.3,437.7 629.0,434.5 638.6,428.8 648.3,424.7 657.9,426.3 667.6,418.6 677.2,401.9 686.9,421.6 696.5,421.1 706.2,413.3 715.9,442.7 725.5,456.4 735.2,460.9 744.8,474.8 754.5,464.6 764.1,472.1 773.8,473.1 783.4,462.8 793.1,458.2 802.7,470.6 812.4,465.1 822.0,463.1 831.7,459.2 841.3,458.9 851.0,463.6 860.6,478.2 870.3,459.4 879.9,446.0 889.6,458.1 899.2,449.5 908.9,439.6 918.5,437.1" stroke="#ff1010" stroke-width="1.8"/>
</g>
<g font-family="Liberation Mono, monospace">
<path transform="translate(6.70,41.40) scale(0.717,0.717)" d="M2.4 0.8 V11.6 M2.4 0.8 H9.6 V11.6 M2.4 6 H9.6 M2.4 11 H9.6" fill="none" stroke="#bcbcbc" stroke-width="1.26" stroke-linecap="square"/>
<path transform="translate(16.70,41.40) scale(0.717,0.717)" d="M3.2 0.4 L0.5 5 M2.2 3.4 V11.6 M4.4 3.6 H11.6 M9.1 0.4 V10.4 Q9.1 11.5 7.5 11 M5.8 6 L7.1 8.2" fill="none" stroke="#bcbcbc" stroke-width="1.26" stroke-linecap="square"/>
<text x="26.00" y="50" fill="#bcbcbc" font-family="Liberation Mono, monospace" font-size="11.5" font-weight="normal" textLength="54.40" lengthAdjust="spacingAndGlyphs">:2024/01/12</text>
<path transform="translate(86.70,41.40) scale(0.717,0.717)" d="M2.6 0.4 L1 6 L4.8 10.6 M4.2 3.6 Q3.8 8.2 0.5 11.1 M0.5 3.8 H5.2 M8.1 0.5 L6 4.1 H11.2 M10 2.4 L11.3 4.6 M6.5 6.5 H11 V11.4 H6.5 Z" fill="none" stroke="#bcbcbc" stroke-width="1.26" stroke-linecap="square"/>
<path transform="translate(96.70,41.40) scale(0.717,0.717)" d="M3.2 0.4 L0.5 5 M2.2 3.4 V11.6 M4.6 2 H11.6 M8 0.3 V3.9 M5.6 3.9 H10.4 V9.8 H5.6 Z M5.6 5.9 H10.4 M5.6 7.9 H10.4 M4.2 3.9 V11.3 H11.8" fill="none" stroke="#bcbcbc" stroke-width="1.26" stroke-linecap="square"/>
<text x="106.00" y="50" fill="#bcbcbc" font-family="Liberation Mono, monospace" font-size="11.5" font-weight="normal" textLength="29.40" lengthAdjust="spacingAndGlyphs">:9,511</text>
<path transform="translate(141.70,41.40) scale(0.717,0.717)" d="M6 0.3 V1.8 M0.8 1.8 H11.2 M3.6 3.3 H8.4 V5.3 H3.6 Z M1.4 11.6 V6.6 H10.6 V11.6 M4.3 8 H7.7 V10.3 H4.3 Z" fill="none" stroke="#bcbcbc" stroke-width="1.26" stroke-linecap="square"/>
<path transform="translate(151.70,41.40) scale(0.717,0.717)" d="M3.2 0.4 L0.5 5 M2.2 3.4 V11.6 M4.6 2 H11.6 M8 0.3 V3.9 M5.6 3.9 H10.4 V9.8 H5.6 Z M5.6 5.9 H10.4 M5.6 7.9 H10.4 M4.2 3.9 V11.3 H11.8" fill="none" stroke="#bcbcbc" stroke-width="1.26" stroke-linecap="square"/>
<text x="161.00" y="50" fill="#bcbcbc" font-family="Liberation Mono, monospace" font-size="11.5" font-weight="normal" textLength="29.40" lengthAdjust="spacingAndGlyphs">:9,545</text>
<path transform="translate(196.70,41.40) scale(0.717,0.717)" d="M6 0.3 V1.5 M1 4 V1.8 H11 V4 M5.6 4 L3.2 8.8 Q7 9.8 10.6 11.7 M8.2 6.6 Q7.2 10.2 1.5 11.7 M0.8 6.8 H11.2" fill="none" stroke="#bcbcbc" stroke-width="1.26" stroke-linecap="square"/>
<path transform="translate(206.70,41.40) scale(0.717,0.717)" d="M3.2 0.4 L0.5 5 M2.2 3.4 V11.6 M4.6 2 H11.6 M8 0.3 V3.9 M5.6 3.9 H10.4 V9.8 H5.6 Z M5.6 5.9 H10.4 M5.6 7.9 H10.4 M4.2 3.9 V11.3 H11.8" fill="none" stroke="#bcbcbc" stroke-width="1.26" stroke-linecap="square"/>
<text x="216.00" y="50" fill="#bcbcbc" font-family="Liberation Mono, monospace" font-size="11.5" font-weight="normal" textLength="29.40" lengthAdjust="spacingAndGlyphs">:9,449</text>
<path transform="translate(251.70,41.40) scale(0.717,0.717)" d="M3 0.4 L1 4 L3.6 4 M3.8 2.4 L0.8 7.2 H4.4 M2.6 7.2 V11.6 M1.2 8.8 L0.5 10.6 M3.9 8.8 L4.6 10 M7.8 0.4 L5.6 4 M7 2 H10.6 Q9.6 4.6 5.6 6.6 M7.6 3.2 L11.6 6.6 M7.2 7.8 L8.6 8.8 M6.6 9.8 L9.2 11.4" fill="none" stroke="#bcbcbc" stroke-width="1.26" stroke-linecap="square"/>
<path transform="translate(261.70,41.40) scale(0.717,0.717)" d="M3.2 0.4 L0.5 5 M2.2 3.4 V11.6 M4.6 2 H11.6 M8 0.3 V3.9 M5.6 3.9 H10.4 V9.8 H5.6 Z M5.6 5.9 H10.4 M5.6 7.9 H10.4 M4.2 3.9 V11.3 H11.8" fill="none" stroke="#bcbcbc" stroke-width="1.26" stroke-linecap="square"/>
<text x="271.00" y="50" fill="#bcbcbc" font-family="Liberation Mono, monospace" font-size="11.5" font-weight="normal" textLength="29.40" lengthAdjust="spacingAndGlyphs">:9,478</text>
<path transform="translate(6.70,180.90) scale(0.717,0.717)" d="M2.4 0.8 V11.6 M2.4 0.8 H9.6 V11.6 M2.4 6 H9.6 M2.4 11 H9.6" fill="none" stroke="#bcbcbc" stroke-width="1.26" stroke-linecap="square"/>
<path transform="translate(16.70,180.90) scale(0.717,0.717)" d="M3.2 0.4 L0.5 5 M2.2 3.4 V11.6 M4.4 3.6 H11.6 M9.1 0.4 V10.4 Q9.1 11.5 7.5 11 M5.8 6 L7.1 8.2" fill="none" stroke="#bcbcbc" stroke-width="1.26" stroke-linecap="square"/>
<text x="26.00" y="189.5" fill="#bcbcbc" font-family="Liberation Mono, monospace" font-size="11.5" font-weight="normal" textLength="54.40" lengthAdjust="spacingAndGlyphs">:2024/01/12</text>
<path transform="translate(86.70,180.90) scale(0.717,0.717)" d="M2.6 0.4 L1 6 L4.8 10.6 M4.2 3.6 Q3.8 8.2 0.5 11.1 M0.5 3.8 H5.2 M8.1 0.5 L6 4.1 H11.2 M10 2.4 L11.3 4.6 M6.5 6.5 H11 V11.4 H6.5 Z" fill="none" stroke="#bcbcbc" stroke-width="1.26" stroke-linecap="square"/>
<path transform="translate(96.70,180.90) scale(0.717,0.717)" d="M3.2 0.4 L0.5 5 M2.2 3.4 V11.6 M4.6 2 H11.6 M8 0.3 V3.9 M5.6 3.9 H10.4 V9.8 H5.6 Z M5.6 5.9 H10.4 M5.6 7.9 H10.4 M4.2 3.9 V11.3 H11.8" fill="none" stroke="#bcbcbc" stroke-width="1.26" stroke-linecap="square"/>
<text x="106.00" y="189.5" fill="#bcbcbc" font-family="Liberation Mono, monospace" font-size="11.5" font-weight="normal" textLength="29.40" lengthAdjust="spacingAndGlyphs">:4,309</text>
<path transform="translate(141.70,180.90) scale(0.717,0.717)" d="M6 0.3 V1.8 M0.8 1.8 H11.2 M3.6 3.3 H8.4 V5.3 H3.6 Z M1.4 11.6 V6.6 H10.6 V11.6 M4.3 8 H7.7 V10.3 H4.3 Z" fill="none" stroke="#bcbcbc" stroke-width="1.26" stroke-linecap="square"/>
<path transform="translate(151.70,180.90) scale(0.717,0.717)" d="M3.2 0.4 L0.5 5 M2.2 3.4 V11.6 M4.6 2 H11.6 M8 0.3 V3.9 M5.6 3.9 H10.4 V9.8 H5.6 Z M5.6 5.9 H10.4 M5.6 7.9 H10.4 M4.2 3.9 V11.3 H11.8" fill="none" stroke="#bcbcbc" stroke-width="1.26" stroke-linecap="square"/>
<text x="161.00" y="189.5" fill="#bcbcbc" font-family="Liberation Mono, monospace" font-size="11.5" font-weight="normal" textLength="29.40" lengthAdjust="spacingAndGlyphs">:4,329</text>
<path transform="translate(196.70,180.90) scale(0.717,0.717)" d="M6 0.3 V1.5 M1 4 V1.8 H11 V4 M5.6 4 L3.2 8.8 Q7 9.8 10.6 11.7 M8.2 6.6 Q7.2 10.2 1.5 11.7 M0.8 6.8 H11.2" fill="none" stroke="#bcbcbc" stroke-width="1.26" stroke-linecap="square"/>
<path transform="translate(206.70,180.90) scale(0.717,0.717)" d="M3.2 0.4 L0.5 5 M2.2 3.4 V11.6 M4.6 2 H11.6 M8 0.3 V3.9 M5.6 3.9 H10.4 V9.8 H5.6 Z M5.6 5.9 H10.4 M5.6 7.9 H10.4 M4.2 3.9 V11.3 H11.8" fill="none" stroke="#bcbcbc" stroke-width="1.26" stroke-linecap="square"/>
<text x="216.00" y="189.5" fill="#bcbcbc" font-family="Liberation Mono, monospace" font-size="11.5" font-weight="normal" textLength="29.40" lengthAdjust="spacingAndGlyphs">:4,261</text>
<path transform="translate(251.70,180.90) scale(0.717,0.717)" d="M3 0.4 L1 4 L3.6 4 M3.8 2.4 L0.8 7.2 H4.4 M2.6 7.2 V11.6 M1.2 8.8 L0.5 10.6 M3.9 8.8 L4.6 10 M7.8 0.4 L5.6 4 M7 2 H10.6 Q9.6 4.6 5.6 6.6 M7.6 3.2 L11.6 6.6 M7.2 7.8 L8.6 8.8 M6.6 9.8 L9.2 11.4" fill="none" stroke="#bcbcbc" stroke-width="1.26" stroke-linecap="square"/>
<path transform="translate(261.70,180.90) scale(0.717,0.717)" d="M3.2 0.4 L0.5 5 M2.2 3.4 V11.6 M4.6 2 H11.6 M8 0.3 V3.9 M5.6 3.9 H10.4 V9.8 H5.6 Z M5.6 5.9 H10.4 M5.6 7.9 H10.4 M4.2 3.9 V11.3 H11.8" fill="none" stroke="#bcbcbc" stroke-width="1.26" stroke-linecap="square"/>
<text x="271.00" y="189.5" fill="#bcbcbc" font-family="Liberation Mono, monospace" font-size="11.5" font-weight="normal" textLength="29.40" lengthAdjust="spacingAndGlyphs">:4,261</text>
<text x="6.00" y="405" fill="#bcbcbc" font-family="Liberation Mono, monospace" font-size="11.5" font-weight="normal" textLength="4.34" lengthAdjust="spacingAndGlyphs">[</text>
<path transform="translate(11.58,396.40) scale(0.717,0.717)" d="M6 0.5 L0.5 5 M6 0.5 L11.5 5 M3 5.2 H9 M1.5 7.8 H10.5 M6 5.2 V11.3 M3.3 8.8 L4.3 10.4 M8.7 8.8 L7.7 10.4 M0.5 11.3 H11.5" fill="none" stroke="#bcbcbc" stroke-width="1.26" stroke-linecap="square"/>
<path transform="translate(26.40,396.40) scale(0.717,0.717)" d="M3 0.5 L1.8 3.5 M1.8 2.6 H10 M6 0.3 V5.5 M0.5 5.5 H11.5 M4.3 5.5 Q4.3 9.8 0.8 11.5 M7.7 5.5 V10.3 Q7.7 11.2 8.7 11.2 H11.3 V9.6" fill="none" stroke="#bcbcbc" stroke-width="1.26" stroke-linecap="square"/>
<path transform="translate(36.28,396.40) scale(0.717,0.717)" d="M1 0.8 V11.6 M1 0.8 H3.6 L2.2 4.2 Q3.9 6 3.7 7.3 Q3.5 8.3 2.3 8.2 M5 1 H10.5 V6.5 H5 M5 1 V11 L7.6 9.6 M5 3.7 H10.5 M7.2 6.5 Q8.5 9.8 11.6 11.5 M10.8 7.6 L8.6 9" fill="none" stroke="#bcbcbc" stroke-width="1.26" stroke-linecap="square"/>
<path transform="translate(46.16,396.40) scale(0.717,0.717)" d="M1 0.8 L2.2 2.2 M0.5 4.5 H2.2 V9.4 L0.6 11 M2.2 9.8 Q4.5 11.4 11.6 11.1 M4 1.6 H11.2 M4.6 3.4 H10.6 V7.6 H4.6 Z M4.6 5.5 H10.6 M3.8 9.2 H11.4 M7.6 0.4 V10.2" fill="none" stroke="#bcbcbc" stroke-width="1.26" stroke-linecap="square"/>
<path transform="translate(56.04,396.40) scale(0.717,0.717)" d="M3 0.4 L1 4 L3.6 4 M3.8 2.4 L0.8 7.2 H4.4 M2.6 7.2 V11.6 M1.2 8.8 L0.5 10.6 M3.9 8.8 L4.6 10 M8.3 0.3 V2.6 M5.6 1.5 H11.2 M6.1 3.5 H10.7 M5.5 6.3 V5.3 H11.4 V6.3 M7.6 5.3 Q7.6 10 5 11.6 M9.1 5.3 V11 H11.6 V9.8" fill="none" stroke="#bcbcbc" stroke-width="1.26" stroke-linecap="square"/>
<text x="70.22" y="405" fill="#bcbcbc" font-family="Liberation Mono, monospace" font-size="11.5" font-weight="normal" textLength="24.10" lengthAdjust="spacingAndGlyphs">9,478</text>
<path transform="translate(95.56,396.40) scale(0.717,0.717)" d="M2.5 3 L9.5 10 M9.5 3 L2.5 10" fill="none" stroke="#bcbcbc" stroke-width="1.26" stroke-linecap="square"/>
<text x="104.80" y="405" fill="#bcbcbc" font-family="Liberation Mono, monospace" font-size="11.5" font-weight="normal" textLength="24.10" lengthAdjust="spacingAndGlyphs">1.00]</text>
<path transform="translate(130.14,396.40) scale(0.717,0.717)" d="M1.5 6.5 H10.5" fill="none" stroke="#bcbcbc" stroke-width="1.26" stroke-linecap="square"/>
<text x="139.38" y="405" fill="#bcbcbc" font-family="Liberation Mono, monospace" font-size="11.5" font-weight="normal" textLength="4.34" lengthAdjust="spacingAndGlyphs">[</text>
<path transform="translate(144.96,396.40) scale(0.717,0.717)" d="M6.3 0.3 L5.3 2 M2 2 H10 V11.6 M2 2 V11.6 M2 6.6 H10 M2 11 H10" fill="none" stroke="#bcbcbc" stroke-width="1.26" stroke-linecap="square"/>
<path transform="translate(154.84,396.40) scale(0.717,0.717)" d="M6 0.5 L0.5 5 M6 0.5 L11.5 5 M3 5.2 H9 M1.5 7.8 H10.5 M6 5.2 V11.3 M3.3 8.8 L4.3 10.4 M8.7 8.8 L7.7 10.4 M0.5 11.3 H11.5" fill="none" stroke="#bcbcbc" stroke-width="1.26" stroke-linecap="square"/>
<path transform="translate(169.66,396.40) scale(0.717,0.717)" d="M3 0.5 L1.8 3.5 M1.8 2.6 H10 M6 0.3 V5.5 M0.5 5.5 H11.5 M4.3 5.5 Q4.3 9.8 0.8 11.5 M7.7 5.5 V10.3 Q7.7 11.2 8.7 11.2 H11.3 V9.6" fill="none" stroke="#bcbcbc" stroke-width="1.26" stroke-linecap="square"/>
<path transform="translate(179.54,396.40) scale(0.717,0.717)" d="M1 0.8 V11.6 M1 0.8 H3.6 L2.2 4.2 Q3.9 6 3.7 7.3 Q3.5 8.3 2.3 8.2 M5 1 H10.5 V6.5 H5 M5 1 V11 L7.6 9.6 M5 3.7 H10.5 M7.2 6.5 Q8.5 9.8 11.6 11.5 M10.8 7.6 L8.6 9" fill="none" stroke="#bcbcbc" stroke-width="1.26" stroke-linecap="square"/>
<path transform="translate(189.42,396.40) scale(0.717,0.717)" d="M1 0.8 L2.2 2.2 M0.5 4.5 H2.2 V9.4 L0.6 11 M2.2 9.8 Q4.5 11.4 11.6 11.1 M4 1.6 H11.2 M4.6 3.4 H10.6 V7.6 H4.6 Z M4.6 5.5 H10.6 M3.8 9.2 H11.4 M7.6 0.4 V10.2" fill="none" stroke="#bcbcbc" stroke-width="1.26" stroke-linecap="square"/>
<path transform="translate(199.30,396.40) scale(0.717,0.717)" d="M3 0.4 L1 4 L3.6 4 M3.8 2.4 L0.8 7.2 H4.4 M2.6 7.2 V11.6 M1.2 8.8 L0.5 10.6 M3.9 8.8 L4.6 10 M8.3 0.3 V2.6 M5.6 1.5 H11.2 M6.1 3.5 H10.7 M5.5 6.3 V5.3 H11.4 V6.3 M7.6 5.3 Q7.6 10 5 11.6 M9.1 5.3 V11 H11.6 V9.8" fill="none" stroke="#bcbcbc" stroke-width="1.26" stroke-linecap="square"/>
<text x="213.48" y="405" fill="#bcbcbc" font-family="Liberation Mono, monospace" font-size="11.5" font-weight="normal" textLength="24.10" lengthAdjust="spacingAndGlyphs">4,261</text>
<path transform="translate(238.82,396.40) scale(0.717,0.717)" d="M2.5 3 L9.5 10 M9.5 3 L2.5 10" fill="none" stroke="#bcbcbc" stroke-width="1.26" stroke-linecap="square"/>
<text x="248.06" y="405" fill="#bcbcbc" font-family="Liberation Mono, monospace" font-size="11.5" font-weight="normal" textLength="24.10" lengthAdjust="spacingAndGlyphs">1.00]</text>
<path transform="translate(278.34,396.40) scale(0.717,0.717)" d="M3 0.4 L1 4 L3.6 4 M3.8 2.4 L0.8 7.2 H4.4 M2.6 7.2 V11.6 M1.2 8.8 L0.5 10.6 M3.9 8.8 L4.6 10 M7.8 0.4 L5.6 4 M7 2 H10.6 Q9.6 4.6 5.6 6.6 M7.6 3.2 L11.6 6.6 M7.2 7.8 L8.6 8.8 M6.6 9.8 L9.2 11.4" fill="none" stroke="#bcbcbc" stroke-width="1.26" stroke-linecap="square"/>
<path transform="translate(288.22,396.40) scale(0.717,0.717)" d="M3.2 0.4 L0.5 5 M2.2 3.4 V11.6 M4.6 2 H11.6 M8 0.3 V3.9 M5.6 3.9 H10.4 V9.8 H5.6 Z M5.6 5.9 H10.4 M5.6 7.9 H10.4 M4.2 3.9 V11.3 H11.8" fill="none" stroke="#bcbcbc" stroke-width="1.26" stroke-linecap="square"/>
<path transform="translate(303.04,396.40) scale(0.717,0.717)" d="M2.4 0.8 V11.6 M2.4 0.8 H9.6 V11.6 M2.4 6 H9.6 M2.4 11 H9.6" fill="none" stroke="#bcbcbc" stroke-width="1.26" stroke-linecap="square"/>
<path transform="translate(312.92,396.40) scale(0.717,0.717)" d="M3.2 0.4 L0.5 5 M2.2 3.4 V11.6 M4.4 3.6 H11.6 M9.1 0.4 V10.4 Q9.1 11.5 7.5 11 M5.8 6 L7.1 8.2" fill="none" stroke="#bcbcbc" stroke-width="1.26" stroke-linecap="square"/>
<text x="322.16" y="405" fill="#bcbcbc" font-family="Liberation Mono, monospace" font-size="11.5" font-weight="normal" textLength="83.38" lengthAdjust="spacingAndGlyphs">:2024/01/12 5,217</text>
<clipPath id="cp1"><rect x="960" y="40" width="64" height="140"/></clipPath><g clip-path="url(#cp1)">
<text x="972" y="46" fill="#a8a8a8" font-size="11.5" font-weight="normal" font-family="Liberation Mono, monospace" textLength="29.5" lengthAdjust="spacingAndGlyphs">10,000</text>
<text x="972" y="86" fill="#a8a8a8" font-size="11.5" font-weight="normal" font-family="Liberation Mono, monospace" textLength="24.5" lengthAdjust="spacingAndGlyphs">9,500</text>
<text x="972" y="127" fill="#a8a8a8" font-size="11.5" font-weight="normal" font-family="Liberation Mono, monospace" textLength="24.5" lengthAdjust="spacingAndGlyphs">9,000</text>
<text x="972" y="167" fill="#a8a8a8" font-size="11.5" font-weight="normal" font-family="Liberation Mono, monospace" textLength="24.5" lengthAdjust="spacingAndGlyphs">8,500</text>
</g>
<text x="972" y="200" fill="#a8a8a8" font-size="11.5" font-weight="normal" font-family="Liberation Mono, monospace" textLength="24.5" lengthAdjust="spacingAndGlyphs">4,500</text>
<text x="972" y="238" fill="#a8a8a8" font-size="11.5" font-weight="normal" font-family="Liberation Mono, monospace" textLength="24.5" lengthAdjust="spacingAndGlyphs">4,400</text>
<text x="972" y="277" fill="#a8a8a8" font-size="11.5" font-weight="normal" font-family="Liberation Mono, monospace" textLength="24.5" lengthAdjust="spacingAndGlyphs">4,300</text>
<text x="972" y="315" fill="#a8a8a8" font-size="11.5" font-weight="normal" font-family="Liberation Mono, monospace" textLength="24.5" lengthAdjust="spacingAndGlyphs">4,200</text>
<text x="972" y="353" fill="#a8a8a8" font-size="11.5" font-weight="normal" font-family="Liberation Mono, monospace" textLength="24.5" lengthAdjust="spacingAndGlyphs">4,100</text>
<text x="972" y="391" fill="#a8a8a8" font-size="11.5" font-weight="normal" font-family="Liberation Mono, monospace" textLength="24.5" lengthAdjust="spacingAndGlyphs">4,000</text>
<text x="972" y="397" fill="#a8a8a8" font-size="11.5" font-weight="normal" font-family="Liberation Mono, monospace" textLength="24.5" lengthAdjust="spacingAndGlyphs">5,500</text>
<text x="972" y="431" fill="#a8a8a8" font-size="11.5" font-weight="normal" font-family="Liberation Mono, monospace" textLength="24.5" lengthAdjust="spacingAndGlyphs">5,250</text>
<text x="972" y="465" fill="#a8a8a8" font-size="11.5" font-weight="normal" font-family="Liberation Mono, monospace" textLength="24.5" lengthAdjust="spacingAndGlyphs">5,000</text>
<text x="972" y="500" fill="#a8a8a8" font-size="11.5" font-weight="normal" font-family="Liberation Mono, monospace" textLength="24.5" lengthAdjust="spacingAndGlyphs">4,750</text>
<text x="972" y="533" fill="#a8a8a8" font-size="11.5" font-weight="normal" font-family="Liberation Mono, monospace" textLength="24.5" lengthAdjust="spacingAndGlyphs">4,500</text>
<text x="74" y="170" fill="#a8a8a8" font-size="11.5" font-weight="normal" font-family="Liberation Mono, monospace" textLength="9.5" lengthAdjust="spacingAndGlyphs">09</text>
<text x="268" y="170" fill="#a8a8a8" font-size="11.5" font-weight="normal" font-family="Liberation Mono, monospace" textLength="9.5" lengthAdjust="spacingAndGlyphs">10</text>
<text x="470" y="170" fill="#a8a8a8" font-size="11.5" font-weight="normal" font-family="Liberation Mono, monospace" textLength="9.5" lengthAdjust="spacingAndGlyphs">11</text>
<text x="663" y="170" fill="#a8a8a8" font-size="11.5" font-weight="normal" font-family="Liberation Mono, monospace" textLength="9.5" lengthAdjust="spacingAndGlyphs">12</text>
<text x="866" y="170" fill="#a8a8a8" font-size="11.5" font-weight="normal" font-family="Liberation Mono, monospace" textLength="9.5" lengthAdjust="spacingAndGlyphs">01</text>
<text x="74" y="386" fill="#a8a8a8" font-size="11.5" font-weight="normal" font-family="Liberation Mono, monospace" textLength="9.5" lengthAdjust="spacingAndGlyphs">09</text>
<text x="268" y="386" fill="#a8a8a8" font-size="11.5" font-weight="normal" font-family="Liberation Mono, monospace" textLength="9.5" lengthAdjust="spacingAndGlyphs">10</text>
<text x="470" y="386" fill="#a8a8a8" font-size="11.5" font-weight="normal" font-family="Liberation Mono, monospace" textLength="9.5" lengthAdjust="spacingAndGlyphs">11</text>
<text x="663" y="386" fill="#a8a8a8" font-size="11.5" font-weight="normal" font-family="Liberation Mono, monospace" textLength="9.5" lengthAdjust="spacingAndGlyphs">12</text>
<text x="866" y="386" fill="#a8a8a8" font-size="11.5" font-weight="normal" font-family="Liberation Mono, monospace" textLength="9.5" lengthAdjust="spacingAndGlyphs">01</text>
<text x="74" y="545" fill="#a8a8a8" font-size="11.5" font-weight="normal" font-family="Liberation Mono, monospace" textLength="9.5" lengthAdjust="spacingAndGlyphs">09</text>
<text x="268" y="545" fill="#a8a8a8" font-size="11.5" font-weight="normal" font-family="Liberation Mono, monospace" textLength="9.5" lengthAdjust="spacingAndGlyphs">10</text>
<text x="470" y="545" fill="#a8a8a8" font-size="11.5" font-weight="normal" font-family="Liberation Mono, monospace" textLength="9.5" lengthAdjust="spacingAndGlyphs">11</text>
<text x="663" y="545" fill="#a8a8a8" font-size="11.5" font-weight="normal" font-family="Liberation Mono, monospace" textLength="9.5" lengthAdjust="spacingAndGlyphs">12</text>
<text x="866" y="545" fill="#a8a8a8" font-size="11.5" font-weight="normal" font-family="Liberation Mono, monospace" textLength="9.5" lengthAdjust="spacingAndGlyphs">01</text>
<text x="866" y="157.5" fill="#bcbcbc" font-size="11.5" font-weight="normal" font-family="Liberation Mono, monospace" textLength="19.1" lengthAdjust="spacingAndGlyphs">2024</text>
<text x="866" y="373.5" fill="#bcbcbc" font-size="11.5" font-weight="normal" font-family="Liberation Mono, monospace" textLength="19.1" lengthAdjust="spacingAndGlyphs">2024</text>
<text x="866" y="533.5" fill="#bcbcbc" font-size="11.5" font-weight="normal" font-family="Liberation Mono, monospace" textLength="19.1" lengthAdjust="spacingAndGlyphs">2024</text>
</g>
<rect x="971" y="81" width="48" height="17" fill="#d4d4d4"/>
<text x="982" y="92.5" fill="#000" font-size="11.5" font-weight="bold" font-family="Liberation Mono, monospace" textLength="25" lengthAdjust="spacingAndGlyphs">9,478</text>
<rect x="971" y="285" width="48" height="17" fill="#d4d4d4"/>
<text x="982" y="296.5" fill="#000" font-size="11.5" font-weight="bold" font-family="Liberation Mono, monospace" textLength="25" lengthAdjust="spacingAndGlyphs">4,261</text>
<rect x="971" y="429" width="48" height="17" fill="#d4d4d4"/>
<text x="982" y="440.5" fill="#000" font-size="11.5" font-weight="bold" font-family="Liberation Mono, monospace" textLength="25" lengthAdjust="spacingAndGlyphs">5,217</text>
<rect x="5" y="175" width="1014" height="2" fill="#f0f0f0"/>
<rect x="5" y="177" width="1014" height="2" fill="#c4c4c4"/>
<rect x="5" y="390" width="1014" height="3" fill="#f0f0f0"/>
<rect x="5" y="393" width="1014" height="2" fill="#c4c4c4"/>
<rect x="6.5" y="407" width="129" height="38" fill="#fff" stroke="#000"/>
<g font-family="Liberation Mono, monospace" fill="#1a1a1a">
<path transform="translate(8.08,407.40) scale(0.633,0.633)" d="M4.2 0.5 L1 1.5 M0.5 3.8 H4.6 M2.6 1.4 V11.6 M2.6 4.4 L0.5 8.4 M2.6 5 L4.6 7 M8.2 0.4 Q7.2 2.8 5.6 3.9 M7 2 H10.6 Q9.2 5 5.6 6 M9.2 5.4 Q8 8 5.6 9 M8 7.2 H11.2 Q10.2 10.6 5.6 11.6" fill="none" stroke="#1a1a1a" stroke-width="1.42" stroke-linecap="square"/>
<path transform="translate(16.84,407.40) scale(0.633,0.633)" d="M1 1.2 H6 M3.5 0.3 V11 M1.2 3 H5.8 V7 H1.2 Z M1.2 5 H5.8 M1 9 H6 M0.5 11 H6.5 M7 3.6 H11.2 V10.5 Q11.2 11.6 9.6 11.1 M9 0.5 Q9.1 8 6.5 11.6" fill="none" stroke="#1a1a1a" stroke-width="1.42" stroke-linecap="square"/>
<path transform="translate(25.60,407.40) scale(0.633,0.633)" d="M1 1 H11 M3 2.8 L4 5 M9 2.8 L8 5 M0.5 6.6 H11.5 M6 1 V11.7" fill="none" stroke="#1a1a1a" stroke-width="1.42" stroke-linecap="square"/>
<path transform="translate(34.36,407.40) scale(0.633,0.633)" d="M2.4 1 V10 M0.5 4.5 H4.5 M0.5 10.6 L4.6 9 M7.1 0.5 Q6.6 2.8 5.5 4 M6.5 2.5 H11 V10.5 Q11 11.6 9.5 11.1 M7 5 L8.6 6.1 M6.5 8.6 L10 7.5" fill="none" stroke="#1a1a1a" stroke-width="1.42" stroke-linecap="square"/>
<text x="42.54" y="415" fill="#1a1a1a" font-family="Liberation Sans, sans-serif" font-size="10" font-weight="normal" textLength="3.78" lengthAdjust="spacingAndGlyphs">(</text>
<path transform="translate(47.50,407.40) scale(0.633,0.633)" d="M6 0.5 L0.5 5 M6 0.5 L11.5 5 M3 5.2 H9 M1.5 7.8 H10.5 M6 5.2 V11.3 M3.3 8.8 L4.3 10.4 M8.7 8.8 L7.7 10.4 M0.5 11.3 H11.5" fill="none" stroke="#1a1a1a" stroke-width="1.42" stroke-linecap="square"/>
<path transform="translate(60.64,407.40) scale(0.633,0.633)" d="M6.3 0.3 L5.3 2 M2 2 H10 V11.6 M2 2 V11.6 M2 6.6 H10 M2 11 H10" fill="none" stroke="#1a1a1a" stroke-width="1.42" stroke-linecap="square"/>
<path transform="translate(69.40,407.40) scale(0.633,0.633)" d="M6 0.5 L0.5 5 M6 0.5 L11.5 5 M3 5.2 H9 M1.5 7.8 H10.5 M6 5.2 V11.3 M3.3 8.8 L4.3 10.4 M8.7 8.8 L7.7 10.4 M0.5 11.3 H11.5" fill="none" stroke="#1a1a1a" stroke-width="1.42" stroke-linecap="square"/>
<text x="77.58" y="415" fill="#1a1a1a" font-family="Liberation Sans, sans-serif" font-size="10" font-weight="normal" textLength="3.78" lengthAdjust="spacingAndGlyphs">)</text>
<path transform="translate(16.26,416.90) scale(0.633,0.633)" d="M2 0.5 L1 3 M1.5 2 H5 M0.5 5.5 H5.6 M3 2 V5.5 Q3 9.6 0.5 11.1 M3.5 7.5 L5.6 11 M6 1 H11.6 M6.8 3 H10.8 V6 H6.8 Z M7 7.4 L7.8 9.6 M10.6 7.4 L9.8 9.6 M5.8 11 H11.8" fill="none" stroke="#1a1a1a" stroke-width="1.42" stroke-linecap="square"/>
<path transform="translate(24.98,416.90) scale(0.633,0.633)" d="M0.5 2.5 H6 M1.8 0.5 V8 M4.8 0.5 V8 M1.8 4.6 H4.8 M1.8 6.4 H4.8 M0.5 8 H6 M2 9.4 L0.8 11.6 M4.5 9.4 L5.8 11.6 M7.5 1 H11 V10.5 Q11 11.6 10 11.2 M7.5 1 V7 Q7.5 10 6.5 11.6 M7.5 4 H11 M7.5 7 H11" fill="none" stroke="#1a1a1a" stroke-width="1.42" stroke-linecap="square"/>
<path transform="translate(33.70,416.90) scale(0.633,0.633)" d="M3 0.4 L1 4 L3.6 4 M3.8 2.4 L0.8 7.2 H4.4 M2.6 7.2 V11.6 M1.2 8.8 L0.5 10.6 M3.9 8.8 L4.6 10 M8.6 0.3 L8 1.5 M6 1.5 H11 V6 H6 Z M6 3.8 H11 M8.6 6 V11 L7.6 10.5 M8 7.5 L5.6 10 M9.1 7.5 L11.6 11 M10.6 7 L9.6 8.6" fill="none" stroke="#1a1a1a" stroke-width="1.42" stroke-linecap="square"/>
<text x="41.86" y="424.5" fill="#1a1a1a" font-family="Liberation Sans, sans-serif" font-size="10" font-weight="normal" textLength="86.60" lengthAdjust="spacingAndGlyphs">(9)(0)(SMA)(C):5,088</text>
<path transform="translate(16.26,426.40) scale(0.633,0.633)" d="M2 3 H10 V8 H2 Z M6 0.3 V11.7" fill="none" stroke="#1a1a1a" stroke-width="1.42" stroke-linecap="square"/>
<path transform="translate(24.98,426.40) scale(0.633,0.633)" d="M0.5 2.5 H6 M1.8 0.5 V8 M4.8 0.5 V8 M1.8 4.6 H4.8 M1.8 6.4 H4.8 M0.5 8 H6 M2 9.4 L0.8 11.6 M4.5 9.4 L5.8 11.6 M7.5 1 H11 V10.5 Q11 11.6 10 11.2 M7.5 1 V7 Q7.5 10 6.5 11.6 M7.5 4 H11 M7.5 7 H11" fill="none" stroke="#1a1a1a" stroke-width="1.42" stroke-linecap="square"/>
<path transform="translate(33.70,426.40) scale(0.633,0.633)" d="M3 0.4 L1 4 L3.6 4 M3.8 2.4 L0.8 7.2 H4.4 M2.6 7.2 V11.6 M1.2 8.8 L0.5 10.6 M3.9 8.8 L4.6 10 M8.6 0.3 L8 1.5 M6 1.5 H11 V6 H6 Z M6 3.8 H11 M8.6 6 V11 L7.6 10.5 M8 7.5 L5.6 10 M9.1 7.5 L11.6 11 M10.6 7 L9.6 8.6" fill="none" stroke="#1a1a1a" stroke-width="1.42" stroke-linecap="square"/>
<text x="41.86" y="434" fill="#1a1a1a" font-family="Liberation Sans, sans-serif" font-size="10" font-weight="normal" textLength="90.96" lengthAdjust="spacingAndGlyphs">(26)(0)(SMA)(C):5,100</text>
<path transform="translate(16.26,435.90) scale(0.633,0.633)" d="M3 0.8 V7 M3 0.8 H10 M3 2.8 H9.6 M3 4.8 H9.6 M0.5 7 H11.5 M3 7 V11.6 L5.2 10.6 M6 7 Q8 10 11.6 11.6 M10 8 L7.5 9" fill="none" stroke="#1a1a1a" stroke-width="1.42" stroke-linecap="square"/>
<path transform="translate(24.98,435.90) scale(0.633,0.633)" d="M0.5 2.5 H6 M1.8 0.5 V8 M4.8 0.5 V8 M1.8 4.6 H4.8 M1.8 6.4 H4.8 M0.5 8 H6 M2 9.4 L0.8 11.6 M4.5 9.4 L5.8 11.6 M7.5 1 H11 V10.5 Q11 11.6 10 11.2 M7.5 1 V7 Q7.5 10 6.5 11.6 M7.5 4 H11 M7.5 7 H11" fill="none" stroke="#1a1a1a" stroke-width="1.42" stroke-linecap="square"/>
<path transform="translate(33.70,435.90) scale(0.633,0.633)" d="M3 0.4 L1 4 L3.6 4 M3.8 2.4 L0.8 7.2 H4.4 M2.6 7.2 V11.6 M1.2 8.8 L0.5 10.6 M3.9 8.8 L4.6 10 M8.6 0.3 L8 1.5 M6 1.5 H11 V6 H6 Z M6 3.8 H11 M8.6 6 V11 L7.6 10.5 M8 7.5 L5.6 10 M9.1 7.5 L11.6 11 M10.6 7 L9.6 8.6" fill="none" stroke="#1a1a1a" stroke-width="1.42" stroke-linecap="square"/>
<text x="41.86" y="443.5" fill="#1a1a1a" font-family="Liberation Sans, sans-serif" font-size="10" font-weight="normal" textLength="90.96" lengthAdjust="spacingAndGlyphs">(52)(0)(SMA)(C):5,175</text>
</g>
<rect x="7.5" y="420" width="8" height="2" fill="#f0f060"/>
<rect x="7.5" y="430" width="8" height="2" fill="#40d8f0"/>
<rect x="7.5" y="439" width="8" height="2" fill="#60e060"/>
<path d="M120.5 415 L124 408.5 L127.5 415 Z M128.5 408.5 L134.5 415 M134.5 408.5 L128.5 415" stroke="#222" fill="none" stroke-width="0.9"/>
<g>
<rect x="8" y="6" width="1" height="12" fill="#a4a4a4"/><rect x="8" y="17" width="11" height="1" fill="#a4a4a4"/>
<polyline points="10,14 11.5,11.5 13,12.5 14.5,9.5 16.5,7.5 18,11" fill="none" stroke="#58a8f0" stroke-width="1.3"/>
<circle cx="10" cy="14" r="1.1" fill="#f05868"/>
<circle cx="11.5" cy="11.5" r="1.1" fill="#f05868"/>
<circle cx="13" cy="12.5" r="1.1" fill="#f05868"/>
<circle cx="14.5" cy="9.5" r="1.1" fill="#f05868"/>
<circle cx="16.5" cy="7.5" r="1.1" fill="#f05868"/>
<circle cx="18" cy="11" r="1.1" fill="#f05868"/>
</g>
<path transform="translate(24.00,6.80) scale(0.750,0.750)" d="M6 0.5 L0.5 5 M6 0.5 L11.5 5 M3 5.2 H9 M1.5 7.8 H10.5 M6 5.2 V11.3 M3.3 8.8 L4.3 10.4 M8.7 8.8 L7.7 10.4 M0.5 11.3 H11.5" fill="none" stroke="#303030" stroke-width="1.27" stroke-linecap="square"/>
<path transform="translate(35.60,6.80) scale(0.750,0.750)" d="M3 0.5 L1.8 3.5 M1.8 2.6 H10 M6 0.3 V5.5 M0.5 5.5 H11.5 M4.3 5.5 Q4.3 9.8 0.8 11.5 M7.7 5.5 V10.3 Q7.7 11.2 8.7 11.2 H11.3 V9.6" fill="none" stroke="#303030" stroke-width="1.27" stroke-linecap="square"/>
<path transform="translate(44.40,6.80) scale(0.750,0.750)" d="M1 0.8 V11.6 M1 0.8 H3.6 L2.2 4.2 Q3.9 6 3.7 7.3 Q3.5 8.3 2.3 8.2 M5 1 H10.5 V6.5 H5 M5 1 V11 L7.6 9.6 M5 3.7 H10.5 M7.2 6.5 Q8.5 9.8 11.6 11.5 M10.8 7.6 L8.6 9" fill="none" stroke="#303030" stroke-width="1.27" stroke-linecap="square"/>
<path transform="translate(55.20,6.80) scale(0.750,0.750)" d="M1 0.8 L2.2 2.2 M0.5 4.5 H2.2 V9.4 L0.6 11 M2.2 9.8 Q4.5 11.4 11.6 11.1 M4 1.6 H11.2 M4.6 3.4 H10.6 V7.6 H4.6 Z M4.6 5.5 H10.6 M3.8 9.2 H11.4 M7.6 0.4 V10.2" fill="none" stroke="#303030" stroke-width="1.27" stroke-linecap="square"/>
<path transform="translate(66.60,6.80) scale(0.750,0.750)" d="M3 0.4 L1 4 L3.6 4 M3.8 2.4 L0.8 7.2 H4.4 M2.6 7.2 V11.6 M1.2 8.8 L0.5 10.6 M3.9 8.8 L4.6 10 M8.3 0.3 V2.6 M5.6 1.5 H11.2 M6.1 3.5 H10.7 M5.5 6.3 V5.3 H11.4 V6.3 M7.6 5.3 Q7.6 10 5 11.6 M9.1 5.3 V11 H11.6 V9.8" fill="none" stroke="#303030" stroke-width="1.27" stroke-linecap="square"/>
<path transform="translate(106.00,6.80) scale(0.750,0.750)" d="M6.3 0.3 L5.3 2 M2 2 H10 V11.6 M2 2 V11.6 M2 6.6 H10 M2 11 H10" fill="none" stroke="#303030" stroke-width="1.27" stroke-linecap="square"/>
<path transform="translate(115.80,6.80) scale(0.750,0.750)" d="M6 0.5 L0.5 5 M6 0.5 L11.5 5 M3 5.2 H9 M1.5 7.8 H10.5 M6 5.2 V11.3 M3.3 8.8 L4.3 10.4 M8.7 8.8 L7.7 10.4 M0.5 11.3 H11.5" fill="none" stroke="#303030" stroke-width="1.27" stroke-linecap="square"/>
<path transform="translate(127.80,6.80) scale(0.750,0.750)" d="M3 0.5 L1.8 3.5 M1.8 2.6 H10 M6 0.3 V5.5 M0.5 5.5 H11.5 M4.3 5.5 Q4.3 9.8 0.8 11.5 M7.7 5.5 V10.3 Q7.7 11.2 8.7 11.2 H11.3 V9.6" fill="none" stroke="#303030" stroke-width="1.27" stroke-linecap="square"/>
<path transform="translate(137.00,6.80) scale(0.750,0.750)" d="M1 0.8 V11.6 M1 0.8 H3.6 L2.2 4.2 Q3.9 6 3.7 7.3 Q3.5 8.3 2.3 8.2 M5 1 H10.5 V6.5 H5 M5 1 V11 L7.6 9.6 M5 3.7 H10.5 M7.2 6.5 Q8.5 9.8 11.6 11.5 M10.8 7.6 L8.6 9" fill="none" stroke="#303030" stroke-width="1.27" stroke-linecap="square"/>
<path transform="translate(147.60,6.80) scale(0.750,0.750)" d="M1 0.8 L2.2 2.2 M0.5 4.5 H2.2 V9.4 L0.6 11 M2.2 9.8 Q4.5 11.4 11.6 11.1 M4 1.6 H11.2 M4.6 3.4 H10.6 V7.6 H4.6 Z M4.6 5.5 H10.6 M3.8 9.2 H11.4 M7.6 0.4 V10.2" fill="none" stroke="#303030" stroke-width="1.27" stroke-linecap="square"/>
<path transform="translate(158.00,6.80) scale(0.750,0.750)" d="M3 0.4 L1 4 L3.6 4 M3.8 2.4 L0.8 7.2 H4.4 M2.6 7.2 V11.6 M1.2 8.8 L0.5 10.6 M3.9 8.8 L4.6 10 M8.3 0.3 V2.6 M5.6 1.5 H11.2 M6.1 3.5 H10.7 M5.5 6.3 V5.3 H11.4 V6.3 M7.6 5.3 Q7.6 10 5 11.6 M9.1 5.3 V11 H11.6 V9.8" fill="none" stroke="#303030" stroke-width="1.27" stroke-linecap="square"/>
<g font-family="Liberation Sans, sans-serif" fill="#1e1e1e"><text x="33.6" y="15.6" font-size="10.5" textLength="2.6" lengthAdjust="spacingAndGlyphs">[</text><text x="75.4" y="15.6" font-size="10.5" textLength="2.6" lengthAdjust="spacingAndGlyphs">]</text><text x="125.6" y="15.6" font-size="10.5" textLength="2.6" lengthAdjust="spacingAndGlyphs">[</text><text x="167.3" y="15.6" font-size="10.5" textLength="2.6" lengthAdjust="spacingAndGlyphs">]</text><text x="79.6" y="15.1" font-size="9.6" stroke="#1e1e1e" stroke-width="0.3" textLength="14.2" lengthAdjust="spacingAndGlyphs">1.00</text><text x="171" y="15.1" font-size="9.6" stroke="#1e1e1e" stroke-width="0.3" textLength="14.2" lengthAdjust="spacingAndGlyphs">1.00</text><rect x="98.2" y="11.2" width="3.6" height="1.1"/></g>
<g fill="none" stroke="#6a6a6a" stroke-width="1.3">
<rect x="956.5" y="6.5" width="7" height="10" rx="1" fill="#ececec" stroke="#9a9a9a"/>
<rect x="958.5" y="9" width="8" height="6" rx="1" fill="#f4f4f4"/>
</g>
<rect x="973.5" y="4.5" width="13.5" height="14" rx="3" fill="url(#bg)" stroke="#a8a8a8"/>
<rect x="989.5" y="4.5" width="13.5" height="14" rx="3" fill="url(#bg)" stroke="#a8a8a8"/>
<rect x="1005.5" y="4.5" width="13.5" height="14" rx="3" fill="url(#bg)" stroke="#a8a8a8"/>
<rect x="977" y="13" width="5" height="2" fill="#555"/>
<rect x="993.5" y="9.5" width="6" height="5" fill="none" stroke="#555" stroke-width="1.2"/><rect x="993" y="9" width="7" height="1.6" fill="#555"/>
<path d="M1009 9 L1015.5 15 M1015.5 9 L1009 15" stroke="#555" stroke-width="1.5"/>
<path transform="translate(9.00,25.30) scale(0.742,0.742)" d="M6 0.5 L0.5 5 M6 0.5 L11.5 5 M3 5.2 H9 M1.5 7.8 H10.5 M6 5.2 V11.3 M3.3 8.8 L4.3 10.4 M8.7 8.8 L7.7 10.4 M0.5 11.3 H11.5" fill="none" stroke="#333333" stroke-width="1.28" stroke-linecap="square"/>
<path transform="translate(27.90,25.30) scale(0.742,0.742)" d="M3 0.5 L1.8 3.5 M1.8 2.6 H10 M6 0.3 V5.5 M0.5 5.5 H11.5 M4.3 5.5 Q4.3 9.8 0.8 11.5 M7.7 5.5 V10.3 Q7.7 11.2 8.7 11.2 H11.3 V9.6" fill="none" stroke="#333333" stroke-width="1.28" stroke-linecap="square"/>
<path transform="translate(37.30,25.30) scale(0.742,0.742)" d="M1 0.8 V11.6 M1 0.8 H3.6 L2.2 4.2 Q3.9 6 3.7 7.3 Q3.5 8.3 2.3 8.2 M5 1 H10.5 V6.5 H5 M5 1 V11 L7.6 9.6 M5 3.7 H10.5 M7.2 6.5 Q8.5 9.8 11.6 11.5 M10.8 7.6 L8.6 9" fill="none" stroke="#333333" stroke-width="1.28" stroke-linecap="square"/>
<path transform="translate(46.70,25.30) scale(0.742,0.742)" d="M1 0.8 L2.2 2.2 M0.5 4.5 H2.2 V9.4 L0.6 11 M2.2 9.8 Q4.5 11.4 11.6 11.1 M4 1.6 H11.2 M4.6 3.4 H10.6 V7.6 H4.6 Z M4.6 5.5 H10.6 M3.8 9.2 H11.4 M7.6 0.4 V10.2" fill="none" stroke="#333333" stroke-width="1.28" stroke-linecap="square"/>
<path transform="translate(56.10,25.30) scale(0.742,0.742)" d="M3 0.4 L1 4 L3.6 4 M3.8 2.4 L0.8 7.2 H4.4 M2.6 7.2 V11.6 M1.2 8.8 L0.5 10.6 M3.9 8.8 L4.6 10 M8.3 0.3 V2.6 M5.6 1.5 H11.2 M6.1 3.5 H10.7 M5.5 6.3 V5.3 H11.4 V6.3 M7.6 5.3 Q7.6 10 5 11.6 M9.1 5.3 V11 H11.6 V9.8" fill="none" stroke="#333333" stroke-width="1.28" stroke-linecap="square"/>
<path transform="translate(120.20,25.30) scale(0.742,0.742)" d="M6.3 0.3 L5.3 2 M2 2 H10 V11.6 M2 2 V11.6 M2 6.6 H10 M2 11 H10" fill="none" stroke="#333333" stroke-width="1.28" stroke-linecap="square"/>
<path transform="translate(129.80,25.30) scale(0.742,0.742)" d="M6 0.5 L0.5 5 M6 0.5 L11.5 5 M3 5.2 H9 M1.5 7.8 H10.5 M6 5.2 V11.3 M3.3 8.8 L4.3 10.4 M8.7 8.8 L7.7 10.4 M0.5 11.3 H11.5" fill="none" stroke="#333333" stroke-width="1.28" stroke-linecap="square"/>
<path transform="translate(148.00,25.30) scale(0.742,0.742)" d="M3 0.5 L1.8 3.5 M1.8 2.6 H10 M6 0.3 V5.5 M0.5 5.5 H11.5 M4.3 5.5 Q4.3 9.8 0.8 11.5 M7.7 5.5 V10.3 Q7.7 11.2 8.7 11.2 H11.3 V9.6" fill="none" stroke="#333333" stroke-width="1.28" stroke-linecap="square"/>
<path transform="translate(157.40,25.30) scale(0.742,0.742)" d="M1 0.8 V11.6 M1 0.8 H3.6 L2.2 4.2 Q3.9 6 3.7 7.3 Q3.5 8.3 2.3 8.2 M5 1 H10.5 V6.5 H5 M5 1 V11 L7.6 9.6 M5 3.7 H10.5 M7.2 6.5 Q8.5 9.8 11.6 11.5 M10.8 7.6 L8.6 9" fill="none" stroke="#333333" stroke-width="1.28" stroke-linecap="square"/>
<path transform="translate(166.80,25.30) scale(0.742,0.742)" d="M1 0.8 L2.2 2.2 M0.5 4.5 H2.2 V9.4 L0.6 11 M2.2 9.8 Q4.5 11.4 11.6 11.1 M4 1.6 H11.2 M4.6 3.4 H10.6 V7.6 H4.6 Z M4.6 5.5 H10.6 M3.8 9.2 H11.4 M7.6 0.4 V10.2" fill="none" stroke="#333333" stroke-width="1.28" stroke-linecap="square"/>
<path transform="translate(176.20,25.30) scale(0.742,0.742)" d="M3 0.4 L1 4 L3.6 4 M3.8 2.4 L0.8 7.2 H4.4 M2.6 7.2 V11.6 M1.2 8.8 L0.5 10.6 M3.9 8.8 L4.6 10 M8.3 0.3 V2.6 M5.6 1.5 H11.2 M6.1 3.5 H10.7 M5.5 6.3 V5.3 H11.4 V6.3 M7.6 5.3 Q7.6 10 5 11.6 M9.1 5.3 V11 H11.6 V9.8" fill="none" stroke="#333333" stroke-width="1.28" stroke-linecap="square"/>
<path transform="translate(240.00,25.30) scale(0.742,0.742)" d="M2.4 0.8 V11.6 M2.4 0.8 H9.6 V11.6 M2.4 6 H9.6 M2.4 11 H9.6" fill="none" stroke="#333333" stroke-width="1.28" stroke-linecap="square"/>
<path transform="translate(249.60,25.30) scale(0.742,0.742)" d="M2.5 0.8 H9.5 V4.5 H2.5 Z M6 4.5 V10 M6 7 H9.6 M3 6.4 V9.4 Q2.6 10.6 0.5 11.6 M3.2 9.6 Q6 11.6 11.6 11.4" fill="none" stroke="#333333" stroke-width="1.28" stroke-linecap="square"/>
<rect x="71" y="23" width="39" height="14" fill="#fff"/><text x="73.5" y="32.5" font-family="Liberation Sans, sans-serif" font-size="10.5" fill="#262626" stroke="#262626" stroke-width="0.3" textLength="14.5" lengthAdjust="spacingAndGlyphs">1.00</text><rect x="98.5" y="24.5" width="10" height="11" fill="#e8e8e8" stroke="#c0c0c0"/><rect x="99" y="29.5" width="9" height="1" fill="#c8c8c8"/><path d="M101 28 L103.5 25.8 L106 28 Z" fill="#111"/><path d="M101 32 L103.5 34.2 L106 32 Z" fill="#111"/>
<rect x="191" y="23" width="39" height="14" fill="#fff"/><text x="193.5" y="32.5" font-family="Liberation Sans, sans-serif" font-size="10.5" fill="#262626" stroke="#262626" stroke-width="0.3" textLength="14.5" lengthAdjust="spacingAndGlyphs">1.00</text><rect x="218.5" y="24.5" width="10" height="11" fill="#e8e8e8" stroke="#c0c0c0"/><rect x="219" y="29.5" width="9" height="1" fill="#c8c8c8"/><path d="M221 28 L223.5 25.8 L226 28 Z" fill="#111"/><path d="M221 32 L223.5 34.2 L226 32 Z" fill="#111"/>
<rect x="272" y="23" width="36" height="14" fill="#fff"/><text x="274.5" y="32.5" font-family="Liberation Sans, sans-serif" font-size="10.5" fill="#262626" stroke="#262626" stroke-width="0.3" textLength="13" lengthAdjust="spacingAndGlyphs">100</text><rect x="296.5" y="24.5" width="10" height="11" fill="#e8e8e8" stroke="#c0c0c0"/><rect x="297" y="29.5" width="9" height="1" fill="#c8c8c8"/><path d="M299 28 L301.5 25.8 L304 28 Z" fill="#111"/><path d="M299 32 L301.5 34.2 L304 32 Z" fill="#111"/>
<path d="M263.5 29 L268 29 L265.75 31.5 Z" fill="#111"/>
<path d="M431.5 29 L436 29 L433.75 31.5 Z" fill="#111"/>
<rect x="113" y="24" width="1" height="12" fill="#c6cad2"/><rect x="114" y="24" width="1" height="12" fill="#f6f8fa"/>
<rect x="233" y="24" width="1" height="12" fill="#c6cad2"/><rect x="234" y="24" width="1" height="12" fill="#f6f8fa"/>
<rect x="310" y="24" width="1" height="12" fill="#c6cad2"/><rect x="311" y="24" width="1" height="12" fill="#f6f8fa"/>
<rect x="334" y="24" width="1" height="12" fill="#c6cad2"/><rect x="335" y="24" width="1" height="12" fill="#f6f8fa"/>
<rect x="413" y="24" width="1" height="12" fill="#c6cad2"/><rect x="414" y="24" width="1" height="12" fill="#f6f8fa"/>
<rect x="459" y="24" width="1" height="12" fill="#c6cad2"/><rect x="460" y="24" width="1" height="12" fill="#f6f8fa"/>
<rect x="314" y="22" width="14" height="14" fill="#a9adb5"/>
<rect x="315" y="23" width="12" height="12" fill="#e6e6e4"/>
<rect x="338" y="22" width="13" height="14" fill="#b2b6be"/>
<rect x="318" y="24" width="1" height="11" fill="#4a50c8"/><rect x="316" y="27" width="11" height="1" fill="#4a50c8"/>
<path d="M321 29.5 L324.5 29.5 L323.3 30.7 L325.8 33.2 L324.7 34.3 L322.2 31.8 L321 33 Z" fill="#9030c0"/>
<path d="M340 25 L348.5 30.2 L345.2 30.8 L347.8 33.6 L346.3 34.8 L343.8 32 L341.3 34.2 Z" fill="#c8c0f4" stroke="#6a58cc" stroke-width="1.1" stroke-linejoin="round"/>
<g stroke="#e39a38" stroke-width="0.9" fill="#f9e2bd">
<path d="M358.6 31.5 L356.6 29.8 C355.9 29 356.6 27.9 357.6 28.5 L359 29.5 Z"/>
<rect x="358.3" y="25.2" width="2.5" height="7" rx="1.2"/>
<rect x="360.6" y="23.6" width="2.5" height="8.5" rx="1.2"/>
<rect x="362.9" y="24.0" width="2.5" height="8" rx="1.2"/>
<rect x="365" y="25.8" width="2.2" height="6.5" rx="1.1"/>
<path d="M358.4 29.5 L367.2 29.5 L367 32 C366.8 34 365.5 35.2 363 35.2 C360.6 35.2 359.2 33.8 358.4 31.5 Z" fill="#fdf3dc"/>
</g>
<rect x="359.5" y="29.8" width="7" height="4.5" fill="#fffbea"/>
<path d="M375.5 34.5 L376.5 31 L384.5 23.8 L387 26.4 L379 33.6 Z" fill="#f4bd5a" stroke="#d8942c" stroke-width="0.8" stroke-linejoin="round"/>
<path d="M377.5 31.2 L385 24.6" stroke="#fbe2b0" stroke-width="0.9"/>
<path d="M375.5 34.5 L376.3 31.8 L378.2 33.7 Z" fill="#8a5a20"/>
<path d="M398.5 31 L402.5 35 L405.5 32 L401.5 28 Z" fill="#24509a"/>
<path d="M393.5 34.8 L394.5 31.5 L402.5 23.8 L405.2 26.5 L397.2 34 Z" fill="#a8c8f8" stroke="#3a78d8" stroke-width="0.9" stroke-linejoin="round"/>
<path d="M395.8 31.6 L402.8 24.8" stroke="#e8f0ff" stroke-width="0.9"/>
<rect x="418" y="23" width="11" height="12" fill="#e8ebef"/>
<rect x="417" y="34.5" width="12" height="1" fill="#8a8a8a"/><rect x="417" y="23" width="1" height="12.5" fill="#a0a0a0"/>
<rect x="419" y="29.5" width="1.8" height="5" fill="#2a88ea"/>
<rect x="422" y="24.5" width="1.8" height="10" fill="#2a88ea"/>
<rect x="424.5" y="26.5" width="1.8" height="8" fill="#2a88ea"/>
<rect x="427" y="29.5" width="1.8" height="5" fill="#2a88ea"/>
<rect x="441" y="23" width="10" height="12" fill="#e8ebef"/>
<rect x="440" y="34.5" width="11" height="1" fill="#8a8a8a"/><rect x="440" y="23" width="1" height="12.5" fill="#a0a0a0"/>
<rect x="442" y="29.5" width="1.8" height="5" fill="#58a8f0"/>
<rect x="444.5" y="24.5" width="1.8" height="10" fill="#58a8f0"/>
<rect x="447" y="26.5" width="1.8" height="8" fill="#58a8f0"/>
<rect x="449.3" y="29.5" width="1.8" height="5" fill="#58a8f0"/>
<path d="M441.5 25.5 L450.5 34 M450.5 25.5 L441.5 34" stroke="#f03838" stroke-width="1.3"/>
<path d="M467.5 25.6 A4.6 4.6 0 1 0 472.8 33.2" fill="none" stroke="#2a98e8" stroke-width="1.8"/>
<path d="M464.5 23.4 L469.2 23.4 L469.2 27.6 Z" fill="#2a70f0"/>
<text x="469.6" y="31.6" font-size="6.8" font-weight="bold" fill="#2a88e0" font-family="Liberation Sans, sans-serif">R</text>
<path d="M1002.5 33.5 L1008 28" stroke="#5a5af0" stroke-width="2.6" stroke-linecap="round"/>
<path d="M1006.5 29.5 C1005 27 1007 23.5 1010 24 L1008.5 26 L1010 27.5 L1012.5 25.5 C1013.5 28.5 1010.5 31 1007.5 30 Z" fill="#9a9af8" stroke="#6464e8" stroke-width="0.9"/>
</svg>
</body></html>
